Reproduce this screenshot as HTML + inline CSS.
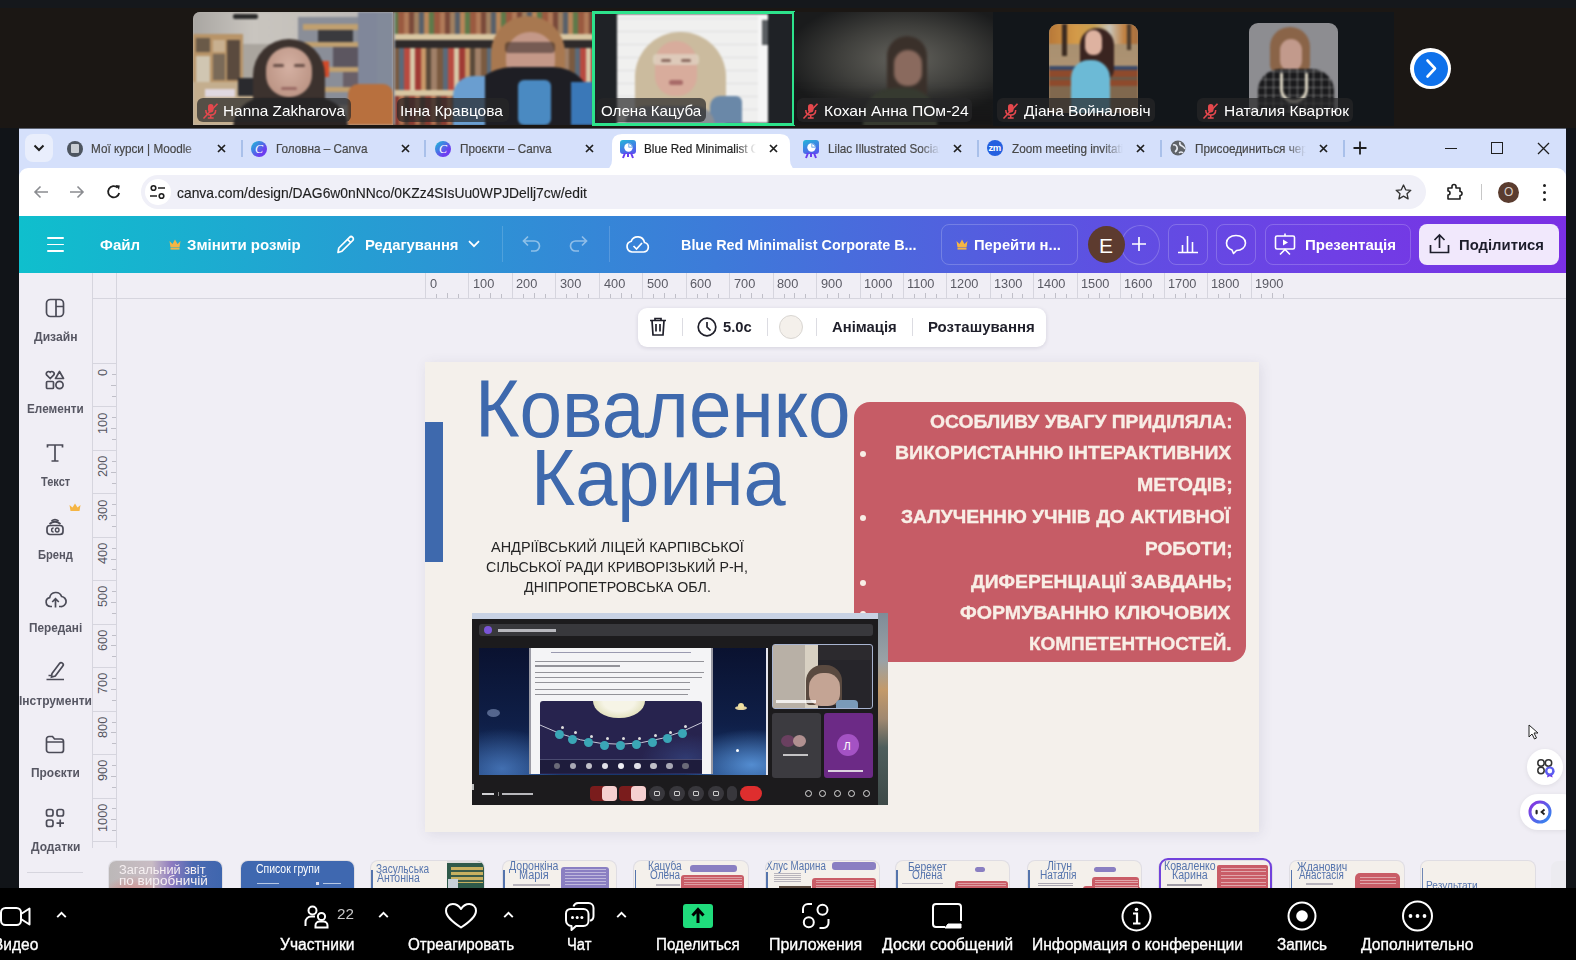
<!DOCTYPE html>
<html><head><meta charset="utf-8">
<style>
*{box-sizing:border-box;margin:0;padding:0}
html,body{width:1576px;height:960px;overflow:hidden}
body{position:relative;background:#1b1714;font-family:"Liberation Sans",sans-serif}
.a{position:absolute}
.t{position:absolute;white-space:nowrap;line-height:1}
svg{position:absolute;overflow:visible}
</style></head><body>
<div class="a" style="left:0px;top:0px;width:1576px;height:8px;background:#15181c;"></div>
<div class="a" style="left:993px;top:12px;width:400.5px;height:113.5px;background:#12161a;"></div>
<div class="a" style="left:193px;top:12px;width:200px;height:113px;overflow:hidden;border-top-left-radius:7px;background:#bbb7b2"><div class="a" style="left:0;top:0;width:200px;height:113px;filter:blur(1.2px)">
<div class="a" style="left:0px;top:0px;width:200px;height:40px;background:linear-gradient(90deg,#a9a6a2,#c9c5bf 30%,#c4c0bb 60%,#b6b4b5);"></div>
<div class="a" style="left:40px;top:2px;width:25px;height:5px;background:#2a2a2a;border-radius:2px;"></div>
<div class="a" style="left:0px;top:22px;width:50px;height:50px;background:#b89468;"></div>
<div class="a" style="left:3px;top:26px;width:14px;height:14px;background:#6a5a48;"></div>
<div class="a" style="left:20px;top:28px;width:12px;height:12px;background:#c8b090;"></div>
<div class="a" style="left:34px;top:28px;width:13px;height:40px;background:#5a4a3e;"></div>
<div class="a" style="left:3px;top:44px;width:14px;height:26px;background:#d0c6b2;"></div>
<div class="a" style="left:20px;top:42px;width:12px;height:26px;background:#7a6a58;"></div>
<div class="a" style="left:50px;top:32px;width:30px;height:40px;background:#aaa59e;"></div>
<div class="a" style="left:105px;top:5px;width:85px;height:88px;background:#8a8e98;"></div>
<div class="a" style="left:110px;top:12px;width:70px;height:6px;background:#c0a070;"></div>
<div class="a" style="left:110px;top:30px;width:70px;height:5px;background:#c0a070;"></div>
<div class="a" style="left:110px;top:55px;width:70px;height:5px;background:#c0a070;"></div>
<div class="a" style="left:110px;top:75px;width:70px;height:5px;background:#c0a070;"></div>
<div class="a" style="left:125px;top:18px;width:35px;height:12px;background:#3a3a3e;"></div>
<div class="a" style="left:140px;top:35px;width:38px;height:20px;background:#5c5660;"></div>
<div class="a" style="left:150px;top:60px;width:28px;height:15px;background:#6a6068;"></div>
<div class="a" style="left:121px;top:49px;width:15px;height:16px;background:#d24a2a;"></div>
<div class="a" style="left:165px;top:0px;width:20px;height:113px;background:#80879a;"></div>
<div class="a" style="left:184px;top:0px;width:16px;height:113px;background:#828a9a;"></div>
<div class="a" style="left:0px;top:70px;width:75px;height:43px;background:#c4ae8e;"></div>
<div class="a" style="left:12px;top:77px;width:30px;height:8px;background:#e0d8e0;"></div>
<div class="a" style="left:45px;top:66px;width:22px;height:18px;background:#2a2a2e;"></div>
<div class="a" style="left:155px;top:72px;width:45px;height:41px;background:#b8703e;border-radius:10px 10px 0 0;"></div>
<div class="a" style="left:60px;top:27px;width:72px;height:90px;background:#3c322e;border-radius:36px 36px 6px 6px;"></div>
<div class="a" style="left:73px;top:35px;width:46px;height:50px;background:radial-gradient(ellipse at 50% 40%,#d4b0a2,#b89080 90%);border-radius:23px 23px 22px 22px;"></div>
<div class="a" style="left:80px;top:52px;width:11px;height:3px;background:#6a5048;border-radius:2px;"></div>
<div class="a" style="left:101px;top:52px;width:11px;height:3px;background:#6a5048;border-radius:2px;"></div>
<div class="a" style="left:88px;top:75px;width:16px;height:3px;background:#9a6a64;border-radius:2px;"></div>
<div class="a" style="left:40px;top:86px;width:115px;height:30px;background:#2a2424;border-radius:30px 30px 0 0;"></div>
</div></div>
<div class="a" style="left:393px;top:12px;width:200px;height:113px;overflow:hidden;background:#6b4a36"><div class="a" style="left:0;top:0;width:200px;height:113px;filter:blur(1px)">
<div class="a" style="left:0px;top:0px;width:200px;height:23px;background:repeating-linear-gradient(90deg,#5e7a4a 0 5px,#9a5a40 5px 11px,#b07a58 11px 16px,#7a4a3a 16px 21px,#a08060 21px 26px,#58606a 26px 31px,#b8865a 31px 36px);"></div>
<div class="a" style="left:0px;top:22px;width:200px;height:6px;background:#d8c6a2;"></div>
<div class="a" style="left:0px;top:28px;width:200px;height:8px;background:#2e2a2a;"></div>
<div class="a" style="left:0px;top:36px;width:200px;height:42px;background:repeating-linear-gradient(90deg,#7a5a40 0 6px,#5a6a7a 6px 11px,#b84a40 11px 17px,#d8c8a8 17px 22px,#a03a34 22px 28px,#c89868 28px 33px,#5a4a3a 33px 38px,#a08068 38px 44px);"></div>
<div class="a" style="left:0px;top:78px;width:200px;height:6px;background:#d8c6a2;"></div>
<div class="a" style="left:0px;top:84px;width:200px;height:29px;background:repeating-linear-gradient(90deg,#8a3a30 0 6px,#b07050 6px 11px,#5a4034 11px 16px);"></div>
<div class="a" style="left:0px;top:0px;width:2px;height:113px;background:#9aa0a8;"></div>
<div class="a" style="left:98px;top:4px;width:74px;height:75px;background:#a87850;border-radius:37px 37px 10px 10px;"></div>
<div class="a" style="left:113px;top:20px;width:49px;height:52px;background:#c49888;border-radius:24px 24px 22px 22px;"></div>
<div class="a" style="left:112px;top:30px;width:50px;height:11px;background:rgba(40,30,30,.5);border-radius:4px;"></div>
<div class="a" style="left:128px;top:55px;width:18px;height:3px;background:#8a5a58;border-radius:2px;"></div>
<div class="a" style="left:70px;top:55px;width:130px;height:60px;background:#1e1e24;border-radius:50px 40px 0 0;"></div>
<div class="a" style="left:60px;top:64px;width:32px;height:50px;background:#6a9ed0;border-radius:20px 0 0 0;"></div>
<div class="a" style="left:125px;top:68px;width:33px;height:45px;background:#4a8ac2;border-radius:6px;"></div>
<div class="a" style="left:178px;top:70px;width:22px;height:43px;background:#3a78b8;"></div>
</div></div>
<div class="a" style="left:591.5px;top:11px;width:203px;height:115px;background:#2de38c"></div>
<div class="a" style="left:594.5px;top:14px;width:197px;height:109px;background:#1f2226;overflow:hidden"><div class="a" style="left:0;top:0;width:197px;height:109px;filter:blur(0.8px)">
<div class="a" style="left:22.5px;top:0px;width:151px;height:109px;background:#f0f0ef;"></div>
<div class="a" style="left:22.5px;top:0px;width:151px;height:109px;background:repeating-linear-gradient(0deg,#dedede 0 1px,transparent 1px 13px);"></div>
<div class="a" style="left:163.5px;top:0px;width:10px;height:109px;background:#f6f6f6;"></div>
<div class="a" style="left:167px;top:6px;width:6px;height:25px;background:#5a5e62;"></div>
<div class="a" style="left:40px;top:18px;width:91px;height:100px;background:#cbbb9e;border-radius:45px 45px 10px 10px;"></div>
<div class="a" style="left:60px;top:27px;width:42px;height:55px;background:#d8ac9c;border-radius:21px 21px 20px 20px;"></div>
<div class="a" style="left:58px;top:40px;width:46px;height:11px;background:rgba(225,215,200,.7);border-radius:4px;"></div>
<div class="a" style="left:66px;top:45px;width:10px;height:3px;background:#8a6a60;border-radius:2px;"></div>
<div class="a" style="left:86px;top:45px;width:10px;height:3px;background:#8a6a60;border-radius:2px;"></div>
<div class="a" style="left:74px;top:66px;width:14px;height:5px;background:#a86a68;border-radius:3px;"></div>
<div class="a" style="left:115px;top:82px;width:32px;height:28px;background:#6a88a8;border-radius:10px 6px 0 0;"></div>
<div class="a" style="left:30px;top:92px;width:90px;height:20px;background:#8a8e96;border-radius:20px 20px 0 0;"></div>
</div></div>
<div class="a" style="left:794px;top:12px;width:199px;height:113px;overflow:hidden;background:radial-gradient(ellipse 60% 55% at 55% 42%,#65645e,#3e3e3b 55%,#1a1b1c 100%)"><div class="a" style="left:0;top:0;width:199px;height:113px;filter:blur(1.5px)">
<div class="a" style="left:0px;top:72px;width:199px;height:41px;background:linear-gradient(180deg,rgba(20,20,20,0),rgba(20,20,20,.8));"></div>
<div class="a" style="left:93px;top:24px;width:40px;height:70px;background:#3a302a;border-radius:20px 20px 6px 6px;"></div>
<div class="a" style="left:100px;top:38px;width:28px;height:36px;background:#8a6a5e;border-radius:14px 14px 13px 13px;"></div>
<div class="a" style="left:69px;top:76px;width:74px;height:40px;background:#363a30;border-radius:30px 30px 0 0;"></div>
</div></div>
<div class="a" style="left:1049px;top:24px;width:89px;height:89px;border-radius:9px 9px 0 0;overflow:hidden;background:#a88a66"><div class="a" style="left:0;top:0;width:89px;height:89px;filter:blur(0.8px)">
<div class="a" style="left:0px;top:0px;width:89px;height:22px;background:linear-gradient(90deg,#b87838,#d49a48 30%,#c8a050 50%,#c8c4b8 68%,#c08040 85%,#a87040);"></div>
<div class="a" style="left:0px;top:20px;width:89px;height:30px;background:linear-gradient(180deg,#a89070,#b09474);"></div>
<div class="a" style="left:13px;top:0px;width:5px;height:32px;background:#3a2a20;"></div>
<div class="a" style="left:78px;top:0px;width:4px;height:26px;background:#4a3a2c;"></div>
<div class="a" style="left:0px;top:42px;width:89px;height:4px;background:#3a4a6a;"></div>
<div class="a" style="left:0px;top:46px;width:89px;height:7px;background:#8e4a2c;"></div>
<div class="a" style="left:0px;top:53px;width:89px;height:3px;background:#6a5a48;"></div>
<div class="a" style="left:0px;top:56px;width:89px;height:6px;background:#8e4a2c;"></div>
<div class="a" style="left:0px;top:62px;width:89px;height:27px;background:#80684e;"></div>
<div class="a" style="left:31px;top:4px;width:34px;height:52px;background:#3a2420;border-radius:17px 17px 10px 6px;"></div>
<div class="a" style="left:36px;top:6px;width:17px;height:25px;background:#deb2a0;border-radius:9px 9px 8px 8px;"></div>
<div class="a" style="left:22px;top:36px;width:39px;height:60px;background:#6cbad6;border-radius:18px 18px 0 0;"></div>
</div></div>
<div class="a" style="left:1248.5px;top:23px;width:89.5px;height:90px;border-radius:9px 9px 0 0;overflow:hidden;background:#8d8d91"><div class="a" style="left:0;top:0;width:89.5px;height:90px;filter:blur(0.8px)">
<div class="a" style="left:21px;top:4px;width:40px;height:46px;background:#8a6448;border-radius:20px 20px 8px 8px;"></div>
<div class="a" style="left:31px;top:16px;width:22px;height:32px;background:#c29a8c;border-radius:11px 11px 10px 10px;"></div>
<div class="a" style="left:9px;top:46px;width:76px;height:50px;background:#1a1a1c;border-radius:22px 22px 0 0;"></div>
<div class="a" style="left:9px;top:46px;width:76px;height:50px;background:repeating-linear-gradient(90deg,transparent 0 7px,rgba(200,200,200,.5) 7px 8px),repeating-linear-gradient(0deg,transparent 0 7px,rgba(200,200,200,.45) 7px 8px);border-radius:22px 22px 0 0;"></div>
<div class="a" style="left:31px;top:50px;width:28px;height:30px;border:3.5px solid #ddd6c4;border-top:none;border-radius:0 0 14px 14px"></div>
</div></div>
<div class="a" style="left:1410px;top:48px;width:41px;height:41px;border-radius:50%;background:#fff"></div>
<div class="a" style="left:1413.5px;top:51.5px;width:34px;height:34px;border-radius:50%;background:#0e71eb"></div>
<svg style="left:1410px;top:48px" width="41" height="41"><path d="M17.5 12.5 L25 20.5 L17.5 28.5" stroke="#fff" stroke-width="2.6" fill="none" stroke-linecap="round" stroke-linejoin="round"/></svg>
<div class="a" style="left:197px;top:98px;width:153.7px;height:24px;border-radius:6px;background:rgba(38,38,40,.7)"></div>
<svg style="left:201.5px;top:102.5px" width="17" height="16" viewBox="0 0 17 16"><rect x="6" y="1" width="5.5" height="8.5" rx="2.75" fill="#e5484d"/><path d="M3.8 7 Q3.8 12 8.75 12 Q13.7 12 13.7 7" stroke="#e5484d" stroke-width="1.5" fill="none"/><path d="M8.75 12 V15 M5.8 15 H11.7" stroke="#e5484d" stroke-width="1.5"/><path d="M1.5 15.5 L15.5 0.8" stroke="#e5484d" stroke-width="1.6"/></svg>
<div class="t" style="left:223.25px;top:103.00px;font-size:15px;color:#fff;transform:scaleX(1.0235);transform-origin:0 0;">Hanna Zakharova</div>
<div class="a" style="left:396.7px;top:98px;width:112.0px;height:24px;border-radius:6px;background:rgba(38,38,40,.7)"></div>
<div class="t" style="left:400.28px;top:103.00px;font-size:15px;color:#fff;transform:scaleX(1.0341);transform-origin:0 0;">Інна Кравцова</div>
<div class="a" style="left:597.3px;top:98px;width:108.70000000000005px;height:24px;border-radius:6px;background:rgba(38,38,40,.7)"></div>
<div class="t" style="left:601.07px;top:103.00px;font-size:15px;color:#fff;transform:scaleX(1.0086);transform-origin:0 0;">Олена Кацуба</div>
<div class="a" style="left:797.3px;top:98px;width:175.20000000000005px;height:24px;border-radius:6px;background:rgba(38,38,40,.7)"></div>
<svg style="left:801.8px;top:102.5px" width="17" height="16" viewBox="0 0 17 16"><rect x="6" y="1" width="5.5" height="8.5" rx="2.75" fill="#e5484d"/><path d="M3.8 7 Q3.8 12 8.75 12 Q13.7 12 13.7 7" stroke="#e5484d" stroke-width="1.5" fill="none"/><path d="M8.75 12 V15 M5.8 15 H11.7" stroke="#e5484d" stroke-width="1.5"/><path d="M1.5 15.5 L15.5 0.8" stroke="#e5484d" stroke-width="1.6"/></svg>
<div class="t" style="left:823.52px;top:103.00px;font-size:15px;color:#fff;transform:scaleX(1.0450);transform-origin:0 0;">Кохан Анна ПОм-24</div>
<div class="a" style="left:997px;top:98px;width:157.5999999999999px;height:24px;border-radius:6px;background:rgba(38,38,40,.7)"></div>
<svg style="left:1001.5px;top:102.5px" width="17" height="16" viewBox="0 0 17 16"><rect x="6" y="1" width="5.5" height="8.5" rx="2.75" fill="#e5484d"/><path d="M3.8 7 Q3.8 12 8.75 12 Q13.7 12 13.7 7" stroke="#e5484d" stroke-width="1.5" fill="none"/><path d="M8.75 12 V15 M5.8 15 H11.7" stroke="#e5484d" stroke-width="1.5"/><path d="M1.5 15.5 L15.5 0.8" stroke="#e5484d" stroke-width="1.6"/></svg>
<div class="t" style="left:1023.90px;top:103.00px;font-size:15px;color:#fff;transform:scaleX(1.0340);transform-origin:0 0;">Діана Войналовіч</div>
<div class="a" style="left:1197px;top:98px;width:156.4000000000001px;height:24px;border-radius:6px;background:rgba(38,38,40,.7)"></div>
<svg style="left:1201.5px;top:102.5px" width="17" height="16" viewBox="0 0 17 16"><rect x="6" y="1" width="5.5" height="8.5" rx="2.75" fill="#e5484d"/><path d="M3.8 7 Q3.8 12 8.75 12 Q13.7 12 13.7 7" stroke="#e5484d" stroke-width="1.5" fill="none"/><path d="M8.75 12 V15 M5.8 15 H11.7" stroke="#e5484d" stroke-width="1.5"/><path d="M1.5 15.5 L15.5 0.8" stroke="#e5484d" stroke-width="1.6"/></svg>
<div class="t" style="left:1223.54px;top:103.00px;font-size:15px;color:#fff;transform:scaleX(1.0342);transform-origin:0 0;">Наталия Квартюк</div>
<div class="a" style="left:0;top:128px;width:19px;height:760px;background:#111418"></div>
<div class="a" style="left:1566px;top:128px;width:10px;height:760px;background:#111418"></div>
<div class="a" style="left:19px;top:128px;width:1547px;height:88px;background:#d5e0fb;border-top:1px solid #5c6270"></div>
<div class="a" style="left:19px;top:168px;width:1547px;height:48px;background:#fff;border-radius:9px 9px 0 0"></div>
<div class="a" style="left:25px;top:134px;width:28px;height:28px;border-radius:8px;background:#e9eefc"></div>
<svg style="left:33px;top:144px" width="12" height="8"><path d="M1.5 1.5 L6 6 L10.5 1.5" stroke="#1f1f1f" stroke-width="2" fill="none"/></svg>
<svg style="left:602px;top:134px" width="198" height="36"><path d="M0 36 Q10 36 10 26 L10 10 Q10 0 20 0 L178 0 Q188 0 188 10 L188 26 Q188 36 198 36 Z" fill="#fff"/></svg>
<div class="a" style="left:67px;top:141px;width:16px;height:16px;border-radius:50%;background:#4d5560"></div><div class="a" style="left:71px;top:144px;width:8px;height:9px;background:#c9cdd3;border-radius:1px"></div>
<div class="a" style="left:91px;top:138px;width:113px;height:20px;overflow:hidden;-webkit-mask-image:linear-gradient(90deg,#000 82%,transparent)"><div class="t" style="left:0.10px;top:3.99px;font-size:13px;color:#474747;transform:scaleX(0.9020);transform-origin:0 0;-webkit-text-stroke:0.2px #474747;">Мої курси | Moodle</div></div>
<svg style="left:216.5px;top:143.5px" width="9.0" height="9.0"><path d="M1 1 L8.0 8.0 M8.0 1 L1 8.0" stroke="#1f1f1f" stroke-width="1.7"/></svg>
<div class="a" style="left:251px;top:141px;width:16px;height:16px;border-radius:50%;background:linear-gradient(135deg,#19c3d5,#6b3ef0 70%)"></div><div class="t" style="left:255px;top:143px;font-size:12px;font-style:italic;color:#fff;font-family:Liberation Serif">C</div>
<div class="a" style="left:276px;top:138px;width:112px;height:20px;overflow:hidden;-webkit-mask-image:linear-gradient(90deg,#000 82%,transparent)"><div class="t" style="left:0.10px;top:3.99px;font-size:13px;color:#474747;transform:scaleX(0.9020);transform-origin:0 0;-webkit-text-stroke:0.2px #474747;">Головна – Canva</div></div>
<svg style="left:400.5px;top:143.5px" width="9.0" height="9.0"><path d="M1 1 L8.0 8.0 M8.0 1 L1 8.0" stroke="#1f1f1f" stroke-width="1.7"/></svg>
<div class="a" style="left:435px;top:141px;width:16px;height:16px;border-radius:50%;background:linear-gradient(135deg,#19c3d5,#6b3ef0 70%)"></div><div class="t" style="left:439px;top:143px;font-size:12px;font-style:italic;color:#fff;font-family:Liberation Serif">C</div>
<div class="a" style="left:460px;top:138px;width:112px;height:20px;overflow:hidden;-webkit-mask-image:linear-gradient(90deg,#000 82%,transparent)"><div class="t" style="left:0.10px;top:3.99px;font-size:13px;color:#474747;transform:scaleX(0.9020);transform-origin:0 0;-webkit-text-stroke:0.2px #474747;">Проєкти – Canva</div></div>
<svg style="left:584.5px;top:143.5px" width="9.0" height="9.0"><path d="M1 1 L8.0 8.0 M8.0 1 L1 8.0" stroke="#1f1f1f" stroke-width="1.7"/></svg>
<div class="a" style="left:620px;top:140px;width:16px;height:14px;border-radius:3px;background:linear-gradient(160deg,#23b7d8,#5a4cf0)"></div><svg style="left:623.5px;top:142.5px" width="9" height="9"><circle cx="4.5" cy="4.5" r="4.2" fill="#fff"/><path d="M4.5 4.5 V0.3 A4.2 4.2 0 0 1 8.7 4.5 Z" fill="#3f8be0"/><path d="M5.2 3.8 V1 A3.5 3.5 0 0 1 8 3.8 Z" fill="#fff"/></svg><svg style="left:623px;top:153px" width="10" height="5"><path d="M2 0 L0 5 M8 0 L10 5 M5 0 V4" stroke="#6a3ef0" stroke-width="2"/></svg>
<div class="a" style="left:644px;top:138px;width:112px;height:20px;overflow:hidden;-webkit-mask-image:linear-gradient(90deg,#000 82%,transparent)"><div class="t" style="left:0.10px;top:3.99px;font-size:13px;color:#1f1f1f;transform:scaleX(0.9020);transform-origin:0 0;-webkit-text-stroke:0.2px #1f1f1f;">Blue Red Minimalist Corporate</div></div>
<svg style="left:768.5px;top:143.5px" width="9.0" height="9.0"><path d="M1 1 L8.0 8.0 M8.0 1 L1 8.0" stroke="#1f1f1f" stroke-width="1.7"/></svg>
<div class="a" style="left:803px;top:140px;width:16px;height:14px;border-radius:3px;background:linear-gradient(160deg,#23b7d8,#5a4cf0)"></div><svg style="left:806.5px;top:142.5px" width="9" height="9"><circle cx="4.5" cy="4.5" r="4.2" fill="#fff"/><path d="M4.5 4.5 V0.3 A4.2 4.2 0 0 1 8.7 4.5 Z" fill="#3f8be0"/><path d="M5.2 3.8 V1 A3.5 3.5 0 0 1 8 3.8 Z" fill="#fff"/></svg><svg style="left:806px;top:153px" width="10" height="5"><path d="M2 0 L0 5 M8 0 L10 5 M5 0 V4" stroke="#6a3ef0" stroke-width="2"/></svg>
<div class="a" style="left:828px;top:138px;width:112px;height:20px;overflow:hidden;-webkit-mask-image:linear-gradient(90deg,#000 82%,transparent)"><div class="t" style="left:0.10px;top:3.99px;font-size:13px;color:#474747;transform:scaleX(0.9020);transform-origin:0 0;-webkit-text-stroke:0.2px #474747;">Lilac Illustrated Social</div></div>
<svg style="left:952.5px;top:143.5px" width="9.0" height="9.0"><path d="M1 1 L8.0 8.0 M8.0 1 L1 8.0" stroke="#1f1f1f" stroke-width="1.7"/></svg>
<div class="a" style="left:987px;top:140px;width:16px;height:16px;border-radius:50%;background:#2460e0"></div><div class="t" style="left:988.5px;top:143px;font-size:9.5px;font-weight:bold;color:#fff;letter-spacing:-0.5px">zm</div>
<div class="a" style="left:1011px;top:138px;width:112px;height:20px;overflow:hidden;-webkit-mask-image:linear-gradient(90deg,#000 82%,transparent)"><div class="t" style="left:0.66px;top:3.99px;font-size:13px;color:#474747;transform:scaleX(0.9020);transform-origin:0 0;-webkit-text-stroke:0.2px #474747;">Zoom meeting invitation</div></div>
<svg style="left:1135.5px;top:143.5px" width="9.0" height="9.0"><path d="M1 1 L8.0 8.0 M8.0 1 L1 8.0" stroke="#1f1f1f" stroke-width="1.7"/></svg>
<svg style="left:1170px;top:140px" width="16" height="16"><circle cx="8" cy="8" r="7.5" fill="#5f6368"/><path d="M3 5 Q6 4 7 7 Q8 10 5 12 M10 2 Q9 5 12 6 Q14 7 15 9 M9 13 Q11 11 13 13" stroke="#e6e9f0" stroke-width="1.6" fill="none"/></svg>
<div class="a" style="left:1195px;top:138px;width:111px;height:20px;overflow:hidden;-webkit-mask-image:linear-gradient(90deg,#000 82%,transparent)"><div class="t" style="left:0.10px;top:3.99px;font-size:13px;color:#474747;transform:scaleX(0.9020);transform-origin:0 0;-webkit-text-stroke:0.2px #474747;">Присоединиться через</div></div>
<svg style="left:1318.5px;top:143.5px" width="9.0" height="9.0"><path d="M1 1 L8.0 8.0 M8.0 1 L1 8.0" stroke="#1f1f1f" stroke-width="1.7"/></svg>
<div class="a" style="left:241px;top:140px;width:1.6px;height:17px;background:#a9c0ea"></div>
<div class="a" style="left:424px;top:140px;width:1.6px;height:17px;background:#a9c0ea"></div>
<div class="a" style="left:977px;top:140px;width:1.6px;height:17px;background:#a9c0ea"></div>
<div class="a" style="left:1160px;top:140px;width:1.6px;height:17px;background:#a9c0ea"></div>
<div class="a" style="left:1343px;top:140px;width:1.6px;height:17px;background:#a9c0ea"></div>
<svg style="left:1353px;top:141px" width="14" height="14"><path d="M7 0.5 V13.5 M0.5 7 H13.5" stroke="#1f1f1f" stroke-width="1.8"/></svg>
<div class="a" style="left:1445px;top:148px;width:12px;height:1.4px;background:#1f1f1f"></div>
<div class="a" style="left:1491px;top:142px;width:12px;height:12px;border:1.4px solid #1f1f1f"></div>
<svg style="left:1536.5px;top:141.5px" width="13.0" height="13.0"><path d="M1 1 L12.0 12.0 M12.0 1 L1 12.0" stroke="#1f1f1f" stroke-width="1.3"/></svg>
<svg style="left:33px;top:185px" width="16" height="14"><path d="M15 7 H2 M7.5 1.5 L2 7 L7.5 12.5" stroke="#8a8c90" stroke-width="1.6" fill="none"/></svg>
<svg style="left:69px;top:185px" width="16" height="14"><path d="M1 7 H14 M8.5 1.5 L14 7 L8.5 12.5" stroke="#8a8c90" stroke-width="1.6" fill="none"/></svg>
<svg style="left:106px;top:184px" width="16" height="16"><path d="M13.2 9 A5.6 5.6 0 1 1 11.5 3.6" stroke="#1f1f1f" stroke-width="1.8" fill="none"/><path d="M9.5 1 L13.8 1.6 L13 5.8 Z" fill="#1f1f1f"/></svg>
<div class="a" style="left:141px;top:175px;width:1285px;height:34px;border-radius:17px;background:#f0f0f8"></div>
<div class="a" style="left:145px;top:179px;width:26px;height:26px;border-radius:13px;background:#fff"></div>
<svg style="left:149px;top:184px" width="17" height="16"><path d="M9 4 H16 M1 12 H8" stroke="#1f1f1f" stroke-width="1.7"/><circle cx="4.5" cy="4" r="2.3" stroke="#1f1f1f" stroke-width="1.6" fill="none"/><circle cx="12.5" cy="12" r="2.3" stroke="#1f1f1f" stroke-width="1.6" fill="none"/></svg>
<div class="t" style="left:177.42px;top:184.59px;font-size:15px;color:#1f1f1f;transform:scaleX(0.9242);transform-origin:0 0;-webkit-text-stroke:0.15px #1f1f1f;">canva.com/design/DAG6w0nNNco/0KZz4SIsUu0WPJDellj7cw/edit</div>
<svg style="left:1395px;top:184px" width="17" height="16"><path d="M8.5 1 L10.7 5.8 L15.8 6.3 L12 9.7 L13.1 14.8 L8.5 12.2 L3.9 14.8 L5 9.7 L1.2 6.3 L6.3 5.8 Z" stroke="#333" stroke-width="1.35" fill="none" stroke-linejoin="round"/></svg>
<svg style="left:1446px;top:183px" width="18" height="18"><path d="M2 5 H6 V3.5 A2 2 0 0 1 10 3.5 V5 H14 V8.5 A2 2 0 0 1 14 12.5 V16 H2 V12 A2 2 0 0 0 2 8 Z" stroke="#1f1f1f" stroke-width="1.6" fill="none" stroke-linejoin="round"/></svg>
<div class="a" style="left:1481px;top:184px;width:1px;height:16px;background:#c7c7c7"></div>
<div class="a" style="left:1498px;top:182px;width:21px;height:21px;border-radius:50%;background:#5a3c2f"></div>
<div class="t" style="left:1504px;top:186px;font-size:12px;color:#d9cfc8">O</div>
<div class="a" style="left:1543px;top:184px;width:3.4px;height:3.4px;border-radius:50%;background:#1f1f1f"></div>
<div class="a" style="left:1543px;top:191px;width:3.4px;height:3.4px;border-radius:50%;background:#1f1f1f"></div>
<div class="a" style="left:1543px;top:198px;width:3.4px;height:3.4px;border-radius:50%;background:#1f1f1f"></div>
<div class="a" style="left:19px;top:216px;width:1547px;height:57px;background:linear-gradient(90deg,#0fbfcd 0%,#3d7bd9 45%,#5e50e2 70%,#6f3fe5 85%,#7b2fe4 100%)"></div>
<div class="a" style="left:47px;top:237.1px;width:16.5px;height:1.8px;background:#fff;border-radius:1px"></div>
<div class="a" style="left:47px;top:243.6px;width:16.5px;height:1.8px;background:#fff;border-radius:1px"></div>
<div class="a" style="left:47px;top:250.1px;width:16.5px;height:1.8px;background:#fff;border-radius:1px"></div>
<div class="t" style="left:99.50px;top:236.79px;font-size:15px;color:#fff;font-weight:bold;transform:scaleX(1.0059);transform-origin:0 0;">Файл</div>
<svg style="left:169px;top:239px" width="12" height="11"><path d="M0.5 2 L3.5 5 L6 0.5 L8.5 5 L11.5 2 L10.5 8.5 H1.5 Z" fill="#f5b544"/><rect x="1.5" y="9" width="9" height="1.6" fill="#f5b544"/></svg>
<div class="t" style="left:187.25px;top:236.79px;font-size:15px;color:#fff;font-weight:bold;transform:scaleX(1.0027);transform-origin:0 0;">Змінити розмір</div>
<svg style="left:336px;top:235px" width="20" height="19"><path d="M2 17.5 L2.8 13 L13.5 2.3 A2.1 2.1 0 0 1 16.7 5.5 L6 16.2 Z M11.5 4.3 L14.7 7.5" stroke="#fff" stroke-width="1.7" fill="none" stroke-linejoin="round"/></svg>
<div class="t" style="left:364.71px;top:236.79px;font-size:15px;color:#fff;font-weight:bold;transform:scaleX(0.9879);transform-origin:0 0;">Редагування</div>
<svg style="left:468px;top:240px" width="12" height="8"><path d="M1 1.2 L6 6.2 L11 1.2" stroke="#fff" stroke-width="1.7" fill="none"/></svg>
<div class="a" style="left:502px;top:226px;width:1px;height:36px;background:rgba(255,255,255,.16)"></div>
<svg style="left:522px;top:235px" width="20" height="17"><path d="M6 1.5 L1.5 6 L6 10.5 M1.5 6 H12.5 A5 5 0 0 1 12.5 16 H9" stroke="rgba(255,255,255,.45)" stroke-width="1.7" fill="none"/></svg>
<svg style="left:568px;top:235px" width="20" height="17"><path d="M14 1.5 L18.5 6 L14 10.5 M18.5 6 H7.5 A5 5 0 0 0 7.5 16 H11" stroke="rgba(255,255,255,.45)" stroke-width="1.7" fill="none"/></svg>
<div class="a" style="left:609px;top:226px;width:1px;height:36px;background:rgba(255,255,255,.16)"></div>
<svg style="left:626px;top:236px" width="23" height="17"><path d="M6 16 H17.5 A4.8 4.8 0 0 0 18.5 6.5 A7 7 0 0 0 5.2 5.2 A5.5 5.5 0 0 0 6 16 Z" stroke="#fff" stroke-width="1.7" fill="none"/><path d="M7.5 10 L10.5 13 L16 7" stroke="#fff" stroke-width="1.7" fill="none"/></svg>
<div class="t" style="left:681.24px;top:237.29px;font-size:15px;color:#fff;font-weight:bold;transform:scaleX(0.9582);transform-origin:0 0;">Blue Red Minimalist Corporate B...</div>
<div class="a" style="left:941px;top:224px;width:137px;height:41px;border-radius:8px;border:1px solid rgba(255,255,255,.2)"></div>
<svg style="left:956px;top:239px" width="12" height="11"><path d="M0.5 2 L3.5 5 L6 0.5 L8.5 5 L11.5 2 L10.5 8.5 H1.5 Z" fill="#f5b544"/><rect x="1.5" y="9" width="9" height="1.6" fill="#f5b544"/></svg>
<div class="t" style="left:974.01px;top:237.29px;font-size:15px;color:#fff;font-weight:bold;transform:scaleX(0.9855);transform-origin:0 0;">Перейти н...</div>
<div class="a" style="left:1121px;top:224.5px;width:39px;height:40px;border-radius:50%;border:1px solid rgba(255,255,255,.2)"></div>
<div class="a" style="left:1088px;top:226px;width:37px;height:37px;border-radius:50%;background:#5d3b2f"></div>
<div class="t" style="left:1099.12px;top:235.21px;font-size:21px;color:#fff;">E</div>
<svg style="left:1131px;top:236px" width="16" height="16"><path d="M8 1 V15 M1 8 H15" stroke="#fff" stroke-width="1.7"/></svg>
<div class="a" style="left:1168px;top:224px;width:40px;height:41px;border-radius:8px;border:1px solid rgba(255,255,255,.2)"></div>
<svg style="left:1177px;top:234px" width="22" height="20"><path d="M1 18.5 H21 M5.5 18.5 V11 M10.5 18.5 V2 M15.5 18.5 V8" stroke="#fff" stroke-width="1.6"/></svg>
<div class="a" style="left:1216px;top:224px;width:40px;height:41px;border-radius:8px;border:1px solid rgba(255,255,255,.2)"></div>
<svg style="left:1225px;top:234px" width="22" height="21"><path d="M11 1.5 C5.5 1.5 1.5 4.8 1.5 9 C1.5 12.2 3.8 14.8 7 16 L8.5 19.5 L11.5 16.5 C16.5 16.5 20.5 13.2 20.5 9 C20.5 4.8 16.5 1.5 11 1.5 Z" stroke="#fff" stroke-width="1.6" fill="none" stroke-linejoin="round"/></svg>
<div class="a" style="left:1265px;top:224px;width:146px;height:41px;border-radius:8px;border:1px solid rgba(255,255,255,.2)"></div>
<svg style="left:1274px;top:233px" width="22" height="22"><rect x="1.5" y="3" width="19" height="13" rx="1.5" stroke="#fff" stroke-width="1.6" fill="none"/><path d="M11 0.5 V3 M6 21.5 L11 16.5 L16 21.5" stroke="#fff" stroke-width="1.6" fill="none"/><path d="M9 6.5 L14 9.5 L9 12.5 Z" fill="#fff"/></svg>
<div class="t" style="left:1305.00px;top:237.29px;font-size:15px;color:#fff;font-weight:bold;transform:scaleX(1.0028);transform-origin:0 0;">Презентація</div>
<div class="a" style="left:1419px;top:224px;width:140px;height:41px;border-radius:8px;background:#f1e8fc"></div>
<svg style="left:1429px;top:233px" width="21" height="21"><path d="M1.5 12 V19.5 H19.5 V12 M10.5 15 V2 M5.5 7 L10.5 2 L15.5 7" stroke="#1d1d2b" stroke-width="1.7" fill="none"/></svg>
<div class="t" style="left:1459.01px;top:237.29px;font-size:15px;color:#1d1d2b;font-weight:bold;transform:scaleX(0.9896);transform-origin:0 0;">Поділитися</div>
<div class="a" style="left:19px;top:273px;width:1547px;height:615px;background:#f0eef5"></div>
<div class="a" style="left:92px;top:273px;width:1px;height:580px;background:#d6d5de"></div>
<div class="a" style="left:116px;top:273px;width:1px;height:580px;background:#d6d5de"></div>
<div class="a" style="left:92px;top:298px;width:1474px;height:1px;background:#d6d5de"></div>
<div class="a" style="left:425.0px;top:273px;width:1px;height:25px;background:#d6d5de"></div>
<div class="t" style="left:429.60px;top:278.14px;font-size:12px;color:#5a5a64;transform:scaleX(1.0650);transform-origin:0 0;">0</div>
<div class="a" style="left:435.9px;top:294px;width:1px;height:4px;background:#c0bfc8"></div>
<div class="a" style="left:446.7px;top:293px;width:1px;height:5px;background:#c0bfc8"></div>
<div class="a" style="left:457.6px;top:294px;width:1px;height:4px;background:#c0bfc8"></div>
<div class="a" style="left:468.4px;top:273px;width:1px;height:25px;background:#d6d5de"></div>
<div class="t" style="left:472.52px;top:278.14px;font-size:12px;color:#5a5a64;transform:scaleX(1.0650);transform-origin:0 0;">100</div>
<div class="a" style="left:479.3px;top:294px;width:1px;height:4px;background:#c0bfc8"></div>
<div class="a" style="left:490.2px;top:293px;width:1px;height:5px;background:#c0bfc8"></div>
<div class="a" style="left:501.0px;top:294px;width:1px;height:4px;background:#c0bfc8"></div>
<div class="a" style="left:511.9px;top:273px;width:1px;height:25px;background:#d6d5de"></div>
<div class="t" style="left:516.37px;top:278.14px;font-size:12px;color:#5a5a64;transform:scaleX(1.0650);transform-origin:0 0;">200</div>
<div class="a" style="left:522.8px;top:294px;width:1px;height:4px;background:#c0bfc8"></div>
<div class="a" style="left:533.6px;top:293px;width:1px;height:5px;background:#c0bfc8"></div>
<div class="a" style="left:544.5px;top:294px;width:1px;height:4px;background:#c0bfc8"></div>
<div class="a" style="left:555.4px;top:273px;width:1px;height:25px;background:#d6d5de"></div>
<div class="t" style="left:559.95px;top:278.14px;font-size:12px;color:#5a5a64;transform:scaleX(1.0650);transform-origin:0 0;">300</div>
<div class="a" style="left:566.2px;top:294px;width:1px;height:4px;background:#c0bfc8"></div>
<div class="a" style="left:577.1px;top:293px;width:1px;height:5px;background:#c0bfc8"></div>
<div class="a" style="left:587.9px;top:294px;width:1px;height:4px;background:#c0bfc8"></div>
<div class="a" style="left:598.8px;top:273px;width:1px;height:25px;background:#d6d5de"></div>
<div class="t" style="left:603.53px;top:278.14px;font-size:12px;color:#5a5a64;transform:scaleX(1.0650);transform-origin:0 0;">400</div>
<div class="a" style="left:609.7px;top:294px;width:1px;height:4px;background:#c0bfc8"></div>
<div class="a" style="left:620.5px;top:293px;width:1px;height:5px;background:#c0bfc8"></div>
<div class="a" style="left:631.4px;top:294px;width:1px;height:4px;background:#c0bfc8"></div>
<div class="a" style="left:642.2px;top:273px;width:1px;height:25px;background:#d6d5de"></div>
<div class="t" style="left:646.85px;top:278.14px;font-size:12px;color:#5a5a64;transform:scaleX(1.0650);transform-origin:0 0;">500</div>
<div class="a" style="left:653.1px;top:294px;width:1px;height:4px;background:#c0bfc8"></div>
<div class="a" style="left:664.0px;top:293px;width:1px;height:5px;background:#c0bfc8"></div>
<div class="a" style="left:674.8px;top:294px;width:1px;height:4px;background:#c0bfc8"></div>
<div class="a" style="left:685.7px;top:273px;width:1px;height:25px;background:#d6d5de"></div>
<div class="t" style="left:690.17px;top:278.14px;font-size:12px;color:#5a5a64;transform:scaleX(1.0650);transform-origin:0 0;">600</div>
<div class="a" style="left:696.6px;top:294px;width:1px;height:4px;background:#c0bfc8"></div>
<div class="a" style="left:707.4px;top:293px;width:1px;height:5px;background:#c0bfc8"></div>
<div class="a" style="left:718.3px;top:294px;width:1px;height:4px;background:#c0bfc8"></div>
<div class="a" style="left:729.2px;top:273px;width:1px;height:25px;background:#d6d5de"></div>
<div class="t" style="left:733.62px;top:278.14px;font-size:12px;color:#5a5a64;transform:scaleX(1.0650);transform-origin:0 0;">700</div>
<div class="a" style="left:740.0px;top:294px;width:1px;height:4px;background:#c0bfc8"></div>
<div class="a" style="left:750.9px;top:293px;width:1px;height:5px;background:#c0bfc8"></div>
<div class="a" style="left:761.7px;top:294px;width:1px;height:4px;background:#c0bfc8"></div>
<div class="a" style="left:772.6px;top:273px;width:1px;height:25px;background:#d6d5de"></div>
<div class="t" style="left:777.07px;top:278.14px;font-size:12px;color:#5a5a64;transform:scaleX(1.0650);transform-origin:0 0;">800</div>
<div class="a" style="left:783.5px;top:294px;width:1px;height:4px;background:#c0bfc8"></div>
<div class="a" style="left:794.3px;top:293px;width:1px;height:5px;background:#c0bfc8"></div>
<div class="a" style="left:805.2px;top:294px;width:1px;height:4px;background:#c0bfc8"></div>
<div class="a" style="left:816.0px;top:273px;width:1px;height:25px;background:#d6d5de"></div>
<div class="t" style="left:820.52px;top:278.14px;font-size:12px;color:#5a5a64;transform:scaleX(1.0650);transform-origin:0 0;">900</div>
<div class="a" style="left:826.9px;top:294px;width:1px;height:4px;background:#c0bfc8"></div>
<div class="a" style="left:837.8px;top:293px;width:1px;height:5px;background:#c0bfc8"></div>
<div class="a" style="left:848.6px;top:294px;width:1px;height:4px;background:#c0bfc8"></div>
<div class="a" style="left:859.5px;top:273px;width:1px;height:25px;background:#d6d5de"></div>
<div class="t" style="left:863.57px;top:278.14px;font-size:12px;color:#5a5a64;transform:scaleX(1.0650);transform-origin:0 0;">1000</div>
<div class="a" style="left:870.4px;top:294px;width:1px;height:4px;background:#c0bfc8"></div>
<div class="a" style="left:881.2px;top:293px;width:1px;height:5px;background:#c0bfc8"></div>
<div class="a" style="left:892.1px;top:294px;width:1px;height:4px;background:#c0bfc8"></div>
<div class="a" style="left:903.0px;top:273px;width:1px;height:25px;background:#d6d5de"></div>
<div class="t" style="left:907.02px;top:278.14px;font-size:12px;color:#5a5a64;transform:scaleX(1.0650);transform-origin:0 0;">1100</div>
<div class="a" style="left:913.8px;top:294px;width:1px;height:4px;background:#c0bfc8"></div>
<div class="a" style="left:924.7px;top:293px;width:1px;height:5px;background:#c0bfc8"></div>
<div class="a" style="left:935.5px;top:294px;width:1px;height:4px;background:#c0bfc8"></div>
<div class="a" style="left:946.4px;top:273px;width:1px;height:25px;background:#d6d5de"></div>
<div class="t" style="left:950.47px;top:278.14px;font-size:12px;color:#5a5a64;transform:scaleX(1.0650);transform-origin:0 0;">1200</div>
<div class="a" style="left:957.3px;top:294px;width:1px;height:4px;background:#c0bfc8"></div>
<div class="a" style="left:968.1px;top:293px;width:1px;height:5px;background:#c0bfc8"></div>
<div class="a" style="left:979.0px;top:294px;width:1px;height:4px;background:#c0bfc8"></div>
<div class="a" style="left:989.9px;top:273px;width:1px;height:25px;background:#d6d5de"></div>
<div class="t" style="left:993.92px;top:278.14px;font-size:12px;color:#5a5a64;transform:scaleX(1.0650);transform-origin:0 0;">1300</div>
<div class="a" style="left:1000.7px;top:294px;width:1px;height:4px;background:#c0bfc8"></div>
<div class="a" style="left:1011.6px;top:293px;width:1px;height:5px;background:#c0bfc8"></div>
<div class="a" style="left:1022.4px;top:294px;width:1px;height:4px;background:#c0bfc8"></div>
<div class="a" style="left:1033.3px;top:273px;width:1px;height:25px;background:#d6d5de"></div>
<div class="t" style="left:1037.37px;top:278.14px;font-size:12px;color:#5a5a64;transform:scaleX(1.0650);transform-origin:0 0;">1400</div>
<div class="a" style="left:1044.2px;top:294px;width:1px;height:4px;background:#c0bfc8"></div>
<div class="a" style="left:1055.0px;top:293px;width:1px;height:5px;background:#c0bfc8"></div>
<div class="a" style="left:1065.9px;top:294px;width:1px;height:4px;background:#c0bfc8"></div>
<div class="a" style="left:1076.8px;top:273px;width:1px;height:25px;background:#d6d5de"></div>
<div class="t" style="left:1080.82px;top:278.14px;font-size:12px;color:#5a5a64;transform:scaleX(1.0650);transform-origin:0 0;">1500</div>
<div class="a" style="left:1087.6px;top:294px;width:1px;height:4px;background:#c0bfc8"></div>
<div class="a" style="left:1098.5px;top:293px;width:1px;height:5px;background:#c0bfc8"></div>
<div class="a" style="left:1109.3px;top:294px;width:1px;height:4px;background:#c0bfc8"></div>
<div class="a" style="left:1120.2px;top:273px;width:1px;height:25px;background:#d6d5de"></div>
<div class="t" style="left:1124.27px;top:278.14px;font-size:12px;color:#5a5a64;transform:scaleX(1.0650);transform-origin:0 0;">1600</div>
<div class="a" style="left:1131.1px;top:294px;width:1px;height:4px;background:#c0bfc8"></div>
<div class="a" style="left:1141.9px;top:293px;width:1px;height:5px;background:#c0bfc8"></div>
<div class="a" style="left:1152.8px;top:294px;width:1px;height:4px;background:#c0bfc8"></div>
<div class="a" style="left:1163.7px;top:273px;width:1px;height:25px;background:#d6d5de"></div>
<div class="t" style="left:1167.72px;top:278.14px;font-size:12px;color:#5a5a64;transform:scaleX(1.0650);transform-origin:0 0;">1700</div>
<div class="a" style="left:1174.5px;top:294px;width:1px;height:4px;background:#c0bfc8"></div>
<div class="a" style="left:1185.4px;top:293px;width:1px;height:5px;background:#c0bfc8"></div>
<div class="a" style="left:1196.2px;top:294px;width:1px;height:4px;background:#c0bfc8"></div>
<div class="a" style="left:1207.1px;top:273px;width:1px;height:25px;background:#d6d5de"></div>
<div class="t" style="left:1211.17px;top:278.14px;font-size:12px;color:#5a5a64;transform:scaleX(1.0650);transform-origin:0 0;">1800</div>
<div class="a" style="left:1218.0px;top:294px;width:1px;height:4px;background:#c0bfc8"></div>
<div class="a" style="left:1228.8px;top:293px;width:1px;height:5px;background:#c0bfc8"></div>
<div class="a" style="left:1239.7px;top:294px;width:1px;height:4px;background:#c0bfc8"></div>
<div class="a" style="left:1250.6px;top:273px;width:1px;height:25px;background:#d6d5de"></div>
<div class="t" style="left:1254.62px;top:278.14px;font-size:12px;color:#5a5a64;transform:scaleX(1.0650);transform-origin:0 0;">1900</div>
<div class="a" style="left:1261.4px;top:294px;width:1px;height:4px;background:#c0bfc8"></div>
<div class="a" style="left:1272.3px;top:293px;width:1px;height:5px;background:#c0bfc8"></div>
<div class="a" style="left:1283.1px;top:294px;width:1px;height:4px;background:#c0bfc8"></div>
<div class="a" style="left:92px;top:363.0px;width:25px;height:1px;background:#d6d5de"></div>
<div class="t" style="left:97px;top:369.0px;width:14px;height:7.1px;"><div class="t" style="left:0;top:7.1px;font-size:12px;color:#55555f;transform:rotate(-90deg) scaleX(1.065);transform-origin:0 0">0</div></div>
<div class="a" style="left:112px;top:373.9px;width:4px;height:1px;background:#c0bfc8"></div>
<div class="a" style="left:111px;top:384.7px;width:5px;height:1px;background:#c0bfc8"></div>
<div class="a" style="left:112px;top:395.6px;width:4px;height:1px;background:#c0bfc8"></div>
<div class="a" style="left:92px;top:406.4px;width:25px;height:1px;background:#d6d5de"></div>
<div class="t" style="left:97px;top:412.4px;width:14px;height:21.3px;"><div class="t" style="left:0;top:21.3px;font-size:12px;color:#55555f;transform:rotate(-90deg) scaleX(1.065);transform-origin:0 0">100</div></div>
<div class="a" style="left:112px;top:417.3px;width:4px;height:1px;background:#c0bfc8"></div>
<div class="a" style="left:111px;top:428.2px;width:5px;height:1px;background:#c0bfc8"></div>
<div class="a" style="left:112px;top:439.0px;width:4px;height:1px;background:#c0bfc8"></div>
<div class="a" style="left:92px;top:449.9px;width:25px;height:1px;background:#d6d5de"></div>
<div class="t" style="left:97px;top:455.9px;width:14px;height:21.3px;"><div class="t" style="left:0;top:21.3px;font-size:12px;color:#55555f;transform:rotate(-90deg) scaleX(1.065);transform-origin:0 0">200</div></div>
<div class="a" style="left:112px;top:460.8px;width:4px;height:1px;background:#c0bfc8"></div>
<div class="a" style="left:111px;top:471.6px;width:5px;height:1px;background:#c0bfc8"></div>
<div class="a" style="left:112px;top:482.5px;width:4px;height:1px;background:#c0bfc8"></div>
<div class="a" style="left:92px;top:493.4px;width:25px;height:1px;background:#d6d5de"></div>
<div class="t" style="left:97px;top:499.4px;width:14px;height:21.3px;"><div class="t" style="left:0;top:21.3px;font-size:12px;color:#55555f;transform:rotate(-90deg) scaleX(1.065);transform-origin:0 0">300</div></div>
<div class="a" style="left:112px;top:504.2px;width:4px;height:1px;background:#c0bfc8"></div>
<div class="a" style="left:111px;top:515.1px;width:5px;height:1px;background:#c0bfc8"></div>
<div class="a" style="left:112px;top:525.9px;width:4px;height:1px;background:#c0bfc8"></div>
<div class="a" style="left:92px;top:536.8px;width:25px;height:1px;background:#d6d5de"></div>
<div class="t" style="left:97px;top:542.8px;width:14px;height:21.3px;"><div class="t" style="left:0;top:21.3px;font-size:12px;color:#55555f;transform:rotate(-90deg) scaleX(1.065);transform-origin:0 0">400</div></div>
<div class="a" style="left:112px;top:547.7px;width:4px;height:1px;background:#c0bfc8"></div>
<div class="a" style="left:111px;top:558.5px;width:5px;height:1px;background:#c0bfc8"></div>
<div class="a" style="left:112px;top:569.4px;width:4px;height:1px;background:#c0bfc8"></div>
<div class="a" style="left:92px;top:580.2px;width:25px;height:1px;background:#d6d5de"></div>
<div class="t" style="left:97px;top:586.2px;width:14px;height:21.3px;"><div class="t" style="left:0;top:21.3px;font-size:12px;color:#55555f;transform:rotate(-90deg) scaleX(1.065);transform-origin:0 0">500</div></div>
<div class="a" style="left:112px;top:591.1px;width:4px;height:1px;background:#c0bfc8"></div>
<div class="a" style="left:111px;top:602.0px;width:5px;height:1px;background:#c0bfc8"></div>
<div class="a" style="left:112px;top:612.8px;width:4px;height:1px;background:#c0bfc8"></div>
<div class="a" style="left:92px;top:623.7px;width:25px;height:1px;background:#d6d5de"></div>
<div class="t" style="left:97px;top:629.7px;width:14px;height:21.3px;"><div class="t" style="left:0;top:21.3px;font-size:12px;color:#55555f;transform:rotate(-90deg) scaleX(1.065);transform-origin:0 0">600</div></div>
<div class="a" style="left:112px;top:634.6px;width:4px;height:1px;background:#c0bfc8"></div>
<div class="a" style="left:111px;top:645.4px;width:5px;height:1px;background:#c0bfc8"></div>
<div class="a" style="left:112px;top:656.3px;width:4px;height:1px;background:#c0bfc8"></div>
<div class="a" style="left:92px;top:667.2px;width:25px;height:1px;background:#d6d5de"></div>
<div class="t" style="left:97px;top:673.2px;width:14px;height:21.3px;"><div class="t" style="left:0;top:21.3px;font-size:12px;color:#55555f;transform:rotate(-90deg) scaleX(1.065);transform-origin:0 0">700</div></div>
<div class="a" style="left:112px;top:678.0px;width:4px;height:1px;background:#c0bfc8"></div>
<div class="a" style="left:111px;top:688.9px;width:5px;height:1px;background:#c0bfc8"></div>
<div class="a" style="left:112px;top:699.7px;width:4px;height:1px;background:#c0bfc8"></div>
<div class="a" style="left:92px;top:710.6px;width:25px;height:1px;background:#d6d5de"></div>
<div class="t" style="left:97px;top:716.6px;width:14px;height:21.3px;"><div class="t" style="left:0;top:21.3px;font-size:12px;color:#55555f;transform:rotate(-90deg) scaleX(1.065);transform-origin:0 0">800</div></div>
<div class="a" style="left:112px;top:721.5px;width:4px;height:1px;background:#c0bfc8"></div>
<div class="a" style="left:111px;top:732.3px;width:5px;height:1px;background:#c0bfc8"></div>
<div class="a" style="left:112px;top:743.2px;width:4px;height:1px;background:#c0bfc8"></div>
<div class="a" style="left:92px;top:754.0px;width:25px;height:1px;background:#d6d5de"></div>
<div class="t" style="left:97px;top:760.0px;width:14px;height:21.3px;"><div class="t" style="left:0;top:21.3px;font-size:12px;color:#55555f;transform:rotate(-90deg) scaleX(1.065);transform-origin:0 0">900</div></div>
<div class="a" style="left:112px;top:764.9px;width:4px;height:1px;background:#c0bfc8"></div>
<div class="a" style="left:111px;top:775.8px;width:5px;height:1px;background:#c0bfc8"></div>
<div class="a" style="left:112px;top:786.6px;width:4px;height:1px;background:#c0bfc8"></div>
<div class="a" style="left:92px;top:797.5px;width:25px;height:1px;background:#d6d5de"></div>
<div class="t" style="left:97px;top:803.5px;width:14px;height:28.4px;"><div class="t" style="left:0;top:28.4px;font-size:12px;color:#55555f;transform:rotate(-90deg) scaleX(1.065);transform-origin:0 0">1000</div></div>
<div class="a" style="left:112px;top:808.4px;width:4px;height:1px;background:#c0bfc8"></div>
<div class="a" style="left:111px;top:819.2px;width:5px;height:1px;background:#c0bfc8"></div>
<div class="a" style="left:112px;top:830.1px;width:4px;height:1px;background:#c0bfc8"></div>
<div class="a" style="left:92px;top:841.0px;width:25px;height:1px;background:#d6d5de"></div>
<div class="t" style="left:97px;top:847.0px;width:14px;height:27.5px;"><div class="t" style="left:0;top:27.5px;font-size:12px;color:#55555f;transform:rotate(-90deg) scaleX(1.065);transform-origin:0 0">1100</div></div>
<div class="a" style="left:112px;top:851.8px;width:4px;height:1px;background:#c0bfc8"></div>
<div class="a" style="left:111px;top:862.7px;width:5px;height:1px;background:#c0bfc8"></div>
<div class="a" style="left:112px;top:873.5px;width:4px;height:1px;background:#c0bfc8"></div>
<div class="a" style="left:91px;top:848px;width:27px;height:40px;background:#f0eef5"></div>
<div class="t" style="left:34.15px;top:330.84px;font-size:12px;color:#565662;font-weight:bold;transform:scaleX(1.0107);transform-origin:0 0;">Дизайн</div>
<div class="t" style="left:27.12px;top:402.84px;font-size:12px;color:#565662;font-weight:bold;transform:scaleX(0.9788);transform-origin:0 0;">Елементи</div>
<div class="t" style="left:40.99px;top:475.84px;font-size:12px;color:#565662;font-weight:bold;transform:scaleX(0.9179);transform-origin:0 0;">Текст</div>
<div class="t" style="left:37.75px;top:548.84px;font-size:12px;color:#565662;font-weight:bold;transform:scaleX(0.9311);transform-origin:0 0;">Бренд</div>
<div class="t" style="left:28.91px;top:621.54px;font-size:12px;color:#565662;font-weight:bold;transform:scaleX(0.9824);transform-origin:0 0;">Передані</div>
<div class="t" style="left:19.05px;top:694.54px;font-size:12px;color:#565662;font-weight:bold;transform:scaleX(1.0004);transform-origin:0 0;">Інструменти</div>
<div class="t" style="left:31.11px;top:766.84px;font-size:12px;color:#565662;font-weight:bold;transform:scaleX(0.9932);transform-origin:0 0;">Проєкти</div>
<div class="t" style="left:31.20px;top:840.54px;font-size:12px;color:#565662;font-weight:bold;transform:scaleX(0.9995);transform-origin:0 0;">Додатки</div>
<svg style="left:45px;top:298px" width="20" height="20"><rect x="1.5" y="1.5" width="17" height="17" rx="4" stroke="#4b4b57" stroke-width="1.7" fill="none"/><path d="M11 1.5 V18.5 M11 8.5 H18.5" stroke="#4b4b57" stroke-width="1.7" fill="none"/></svg>
<svg style="left:45px;top:370px" width="20" height="20"><path d="M5.2 8.5 L1.8 5.2 A2 2 0 0 1 5.2 2.3 A2 2 0 0 1 8.6 5.2 Z" stroke="#4b4b57" stroke-width="1.7" fill="none"/><path d="M14.5 1.5 L18.5 8.5 H10.5 Z" stroke="#4b4b57" stroke-width="1.7" fill="none" stroke-linejoin="round"/><rect x="1.5" y="11.5" width="7" height="7" rx="1" stroke="#4b4b57" stroke-width="1.7" fill="none"/><circle cx="14.5" cy="15" r="3.6" stroke="#4b4b57" stroke-width="1.7" fill="none"/></svg>
<svg style="left:45px;top:443px" width="20" height="20"><path d="M2.5 4.5 V2 H17.5 V4.5 M10 2 V18 M6.5 18 H13.5" stroke="#4b4b57" stroke-width="1.7" fill="none"/></svg>
<svg style="left:69px;top:503px" width="12" height="10"><path d="M0.5 2 L3.5 4.5 L6 0.5 L8.5 4.5 L11.5 2 L10.5 8 H1.5 Z" fill="#f5b544"/></svg>
<svg style="left:45px;top:516px" width="20" height="21"><path d="M4.5 8 Q10 3.5 15.5 8" stroke="#4b4b57" stroke-width="1.7" fill="none"/><path d="M6.5 5 Q10 2.2 13.5 5" stroke="#4b4b57" stroke-width="1.7" fill="none"/><rect x="2" y="9.5" width="16" height="9" rx="3" stroke="#4b4b57" stroke-width="1.7" fill="none"/><path d="M8.6 12 A2 2 0 1 0 8.6 16" stroke="#4b4b57" stroke-width="1.4" fill="none"/><ellipse cx="12.2" cy="14" rx="1.8" ry="2" stroke="#4b4b57" stroke-width="1.4" fill="none"/></svg>
<svg style="left:45px;top:590px" width="21" height="19"><path d="M7 16.5 H5.5 A4.5 4.5 0 0 1 4.7 7.6 A6.2 6.2 0 0 1 16.6 6.5 A4.8 4.8 0 0 1 15.5 16.5 H14" stroke="#4b4b57" stroke-width="1.7" fill="none"/><path d="M10.5 17.5 V9 M7.2 12 L10.5 8.7 L13.8 12" stroke="#4b4b57" stroke-width="1.7" fill="none"/></svg>
<svg style="left:45px;top:661px" width="21" height="20"><path d="M7 12.5 L14.5 2.5 A2 2 0 0 1 17.8 5 L10.3 15 L6.5 16 Z" stroke="#4b4b57" stroke-width="1.7" fill="none"/><path d="M1.5 18.5 H19 M3.5 14.5 H7" stroke="#4b4b57" stroke-width="1.7" fill="none"/></svg>
<svg style="left:45px;top:735px" width="20" height="19"><path d="M1.5 4 A2.5 2.5 0 0 1 4 1.5 H7.5 L9.5 4 H16 A2.5 2.5 0 0 1 18.5 6.5 V15 A2.5 2.5 0 0 1 16 17.5 H4 A2.5 2.5 0 0 1 1.5 15 Z M1.5 7 H18.5" stroke="#4b4b57" stroke-width="1.7" fill="none"/></svg>
<svg style="left:45px;top:808px" width="20" height="20"><rect x="1.5" y="1.5" width="6.5" height="6.5" rx="2" stroke="#4b4b57" stroke-width="1.7" fill="none"/><rect x="12" y="1.5" width="6.5" height="6.5" rx="2" stroke="#4b4b57" stroke-width="1.7" fill="none"/><rect x="1.5" y="12" width="6.5" height="6.5" rx="2" stroke="#4b4b57" stroke-width="1.7" fill="none"/><path d="M15.2 11.5 V19 M11.5 15.2 H19" stroke="#4b4b57" stroke-width="1.7" fill="none"/></svg>
<div class="a" style="left:27px;top:872px;width:56px;height:1px;background:#d6d5de"></div>
<div class="a" style="left:425px;top:362px;width:834px;height:470px;background:#f4f0eb;box-shadow:2px 2px 12px rgba(60,60,90,.10)"></div>
<div class="a" style="left:425px;top:421.5px;width:18px;height:140.5px;background:#3e69ad"></div>
<div class="t" style="left:474.55px;top:369.39px;font-size:81px;color:#3e69ad;transform:scaleX(0.9441);transform-origin:0 0;">Коваленко</div>
<div class="t" style="left:531.24px;top:438.04px;font-size:80px;color:#3e69ad;transform:scaleX(0.9470);transform-origin:0 0;">Карина</div>
<div class="t" style="left:490.70px;top:539.87px;font-size:14.2px;color:#252525;transform:scaleX(1.0191);transform-origin:0 0;">АНДРІЇВСЬКИЙ ЛІЦЕЙ КАРПІВСЬКОЇ</div>
<div class="t" style="left:486.07px;top:559.97px;font-size:14.2px;color:#252525;transform:scaleX(1.0013);transform-origin:0 0;">СІЛЬСЬКОЇ РАДИ КРИВОРІЗЬКИЙ Р-Н,</div>
<div class="t" style="left:524.40px;top:580.17px;font-size:14.2px;color:#252525;transform:scaleX(1.0020);transform-origin:0 0;">ДНІПРОПЕТРОВСЬКА ОБЛ.</div>
<div class="a" style="left:853.6px;top:402px;width:392.4px;height:259.5px;border-radius:16px;background:#c65c66"></div>
<div class="t" style="left:929.92px;top:412.73px;font-size:18.5px;color:#f8eee6;font-weight:bold;transform:scaleX(1.0412);transform-origin:0 0;-webkit-text-stroke:0.35px #f8eee6;">ОСОБЛИВУ УВАГУ ПРИДІЛЯЛА:</div>
<div class="t" style="left:894.52px;top:443.93px;font-size:18.5px;color:#f8eee6;font-weight:bold;transform:scaleX(1.0502);transform-origin:0 0;-webkit-text-stroke:0.35px #f8eee6;">ВИКОРИСТАННЮ ІНТЕРАКТИВНИХ</div>
<div class="a" style="left:859.7px;top:451.1px;width:6px;height:6px;border-radius:50%;background:#f8eee6"></div>
<div class="t" style="left:1136.81px;top:476.23px;font-size:18.5px;color:#f8eee6;font-weight:bold;transform:scaleX(1.0564);transform-origin:0 0;-webkit-text-stroke:0.35px #f8eee6;">МЕТОДІВ;</div>
<div class="t" style="left:901.21px;top:508.13px;font-size:18.5px;color:#f8eee6;font-weight:bold;transform:scaleX(1.0410);transform-origin:0 0;-webkit-text-stroke:0.35px #f8eee6;">ЗАЛУЧЕННЮ УЧНІВ ДО АКТИВНОЇ</div>
<div class="a" style="left:859.7px;top:515.3px;width:6px;height:6px;border-radius:50%;background:#f8eee6"></div>
<div class="t" style="left:1144.84px;top:539.93px;font-size:18.5px;color:#f8eee6;font-weight:bold;transform:scaleX(1.0314);transform-origin:0 0;-webkit-text-stroke:0.35px #f8eee6;">РОБОТИ;</div>
<div class="t" style="left:970.87px;top:572.53px;font-size:18.5px;color:#f8eee6;font-weight:bold;transform:scaleX(1.0419);transform-origin:0 0;-webkit-text-stroke:0.35px #f8eee6;">ДИФЕРЕНЦІАЦІЇ ЗАВДАНЬ;</div>
<div class="a" style="left:859.7px;top:579.7px;width:6px;height:6px;border-radius:50%;background:#f8eee6"></div>
<div class="t" style="left:960.34px;top:604.13px;font-size:18.5px;color:#f8eee6;font-weight:bold;transform:scaleX(1.0587);transform-origin:0 0;-webkit-text-stroke:0.35px #f8eee6;">ФОРМУВАННЮ КЛЮЧОВИХ</div>
<div class="a" style="left:859.7px;top:611.3px;width:6px;height:6px;border-radius:50%;background:#f8eee6"></div>
<div class="t" style="left:1029.45px;top:635.13px;font-size:18.5px;color:#f8eee6;font-weight:bold;transform:scaleX(1.0242);transform-origin:0 0;-webkit-text-stroke:0.35px #f8eee6;">КОМПЕТЕНТНОСТЕЙ.</div>
<div class="a" style="left:638px;top:307.5px;width:408px;height:39px;border-radius:9px;background:#fff;box-shadow:0 1px 4px rgba(40,40,80,.14)"></div>
<svg style="left:649px;top:317px" width="18" height="19"><path d="M1 3.5 H17 M6 3.5 V1.5 H12 V3.5 M3 3.5 L4 18 H14 L15 3.5 M7 7 V14.5 M11 7 V14.5" stroke="#1f1f2a" stroke-width="1.7" fill="none"/></svg>
<div class="a" style="left:682px;top:318px;width:1px;height:18px;background:#dcdce2"></div>
<div class="a" style="left:767.3px;top:318px;width:1px;height:18px;background:#dcdce2"></div>
<div class="a" style="left:815.8px;top:318px;width:1px;height:18px;background:#dcdce2"></div>
<div class="a" style="left:912px;top:318px;width:1px;height:18px;background:#dcdce2"></div>
<svg style="left:696.5px;top:317px" width="20" height="20"><circle cx="10" cy="10" r="8.8" stroke="#1f1f2a" stroke-width="1.7" fill="none"/><path d="M10 5 V10 L13.5 13.5" stroke="#1f1f2a" stroke-width="1.7" fill="none"/></svg>
<div class="t" style="left:722.94px;top:319.37px;font-size:15.5px;color:#1f1f2a;font-weight:bold;transform:scaleX(0.9532);transform-origin:0 0;">5.0с</div>
<div class="a" style="left:779.3px;top:314.7px;width:24px;height:24px;border-radius:50%;background:#f4f0eb;border:1px solid #d9d6d2"></div>
<div class="t" style="left:832.24px;top:319.37px;font-size:15.5px;color:#1f1f2a;font-weight:bold;transform:scaleX(0.9570);transform-origin:0 0;">Анімація</div>
<div class="t" style="left:928.03px;top:319.37px;font-size:15.5px;color:#1f1f2a;font-weight:bold;transform:scaleX(0.9670);transform-origin:0 0;">Розташування</div>
<div class="a" style="left:472px;top:613px;width:416px;height:192px;background:#1c1b1d;overflow:hidden">
<div class="a" style="left:0px;top:0px;width:406px;height:5.5px;background:#c8d2e4;"></div>
<div class="a" style="left:406px;top:0px;width:10px;height:192px;background:linear-gradient(180deg,#7f8c98 0%,#9aa2a6 25%,#c39a6a 40%,#a08870 55%,#4e5e5c 70%,#3e4a48 100%);"></div>
<div class="a" style="left:7px;top:10.5px;width:394px;height:12.5px;background:#38383c;border-radius:3px;"></div>
<div class="a" style="left:12px;top:13px;width:8px;height:8px;background:#7a55d8;border-radius:50%;"></div>
<div class="a" style="left:26px;top:15.5px;width:58px;height:3px;background:#b8b8be;"></div>
<div class="a" style="left:7px;top:34.5px;width:287px;height:127px;background:radial-gradient(ellipse 30% 45% at 8% 95%,rgba(80,130,200,.75),transparent 70%),radial-gradient(ellipse 35% 40% at 95% 92%,rgba(90,150,220,.9),transparent 70%),linear-gradient(180deg,#0a1230 0%,#0f1f48 60%,#18386e 100%);"></div>
<div class="a" style="left:15px;top:96px;width:13px;height:8px;background:rgba(170,190,230,.45);border-radius:50%;"></div>
<div class="a" style="left:263px;top:93px;width:12px;height:4px;background:#e0d0a0;border-radius:50%;"></div>
<div class="a" style="left:266px;top:90px;width:6px;height:6px;background:#f0e0a0;border-radius:50%;"></div>
<div class="a" style="left:264px;top:136px;width:3px;height:3px;background:#fff;border-radius:50%;"></div>
<div class="a" style="left:294px;top:34.5px;width:2px;height:127px;background:#e6e6ee;"></div>
<div class="a" style="left:57px;top:35px;width:184px;height:125.5px;background:#f4f4f6;border-left:2px solid #9a9aa4;border-right:2px solid #9a9aa4"></div>
<div class="a" style="left:79px;top:38.5px;width:140px;height:1.2px;background:#9a9ab0;"></div>
<div class="a" style="left:63px;top:47.5px;width:169px;height:1.6px;background:rgba(50,50,60,.5);"></div>
<div class="a" style="left:63px;top:52px;width:85px;height:1.6px;background:rgba(50,50,60,.5);"></div>
<div class="a" style="left:63px;top:58.5px;width:169px;height:1.6px;background:rgba(50,50,60,.5);"></div>
<div class="a" style="left:63px;top:63.5px;width:167px;height:1.6px;background:rgba(50,50,60,.5);"></div>
<div class="a" style="left:63px;top:68.5px;width:155px;height:1.6px;background:rgba(50,50,60,.5);"></div>
<div class="a" style="left:63px;top:75.5px;width:155px;height:1.6px;background:rgba(50,50,60,.5);"></div>
<div class="a" style="left:63px;top:80.5px;width:153px;height:1.6px;background:rgba(50,50,60,.5);"></div>
<div class="a" style="left:67.7px;top:87.5px;width:162.6px;height:73px;background:radial-gradient(ellipse 40% 50% at 90% 80%,rgba(60,90,160,.45),transparent 70%),#27234e;border-radius:3px 3px 0 0;"></div>
<div class="a" style="left:121px;top:87.5px;width:51.7px;height:17.5px;background:radial-gradient(ellipse 50% 100% at 50% 0%,#f6f4e6 60%,#e4e2c0 100%);border-radius:0 0 26px 26px / 0 0 17.5px 17.5px;"></div>
<svg style="left:67.70000000000005px;top:100px" width="170" height="40"><path d="M0 12 Q81 52 163 9" stroke="#c8c8d8" stroke-width="1" fill="none"/></svg>
<div class="a" style="left:82.9px;top:116.5px;width:9px;height:9px;background:#3aa6b6;border-radius:50%;"></div>
<div class="a" style="left:88.9px;top:113px;width:3px;height:3px;background:#ddd;border-radius:50%;"></div>
<div class="a" style="left:96.0px;top:121.7px;width:9px;height:9px;background:#3aa6b6;border-radius:50%;"></div>
<div class="a" style="left:102.0px;top:118.2px;width:3px;height:3px;background:#ddd;border-radius:50%;"></div>
<div class="a" style="left:111.8px;top:125.3px;width:9px;height:9px;background:#3aa6b6;border-radius:50%;"></div>
<div class="a" style="left:117.8px;top:121.8px;width:3px;height:3px;background:#ddd;border-radius:50%;"></div>
<div class="a" style="left:127.8px;top:127.5px;width:9px;height:9px;background:#3aa6b6;border-radius:50%;"></div>
<div class="a" style="left:133.8px;top:124px;width:3px;height:3px;background:#ddd;border-radius:50%;"></div>
<div class="a" style="left:143.9px;top:127.8px;width:9px;height:9px;background:#3aa6b6;border-radius:50%;"></div>
<div class="a" style="left:149.9px;top:124.3px;width:3px;height:3px;background:#ddd;border-radius:50%;"></div>
<div class="a" style="left:159.5px;top:127.2px;width:9px;height:9px;background:#3aa6b6;border-radius:50%;"></div>
<div class="a" style="left:165.5px;top:123.7px;width:3px;height:3px;background:#ddd;border-radius:50%;"></div>
<div class="a" style="left:175.5px;top:124.6px;width:9px;height:9px;background:#3aa6b6;border-radius:50%;"></div>
<div class="a" style="left:181.5px;top:121.1px;width:3px;height:3px;background:#ddd;border-radius:50%;"></div>
<div class="a" style="left:191.1px;top:121.0px;width:9px;height:9px;background:#3aa6b6;border-radius:50%;"></div>
<div class="a" style="left:197.1px;top:117.5px;width:3px;height:3px;background:#ddd;border-radius:50%;"></div>
<div class="a" style="left:205.5px;top:115.5px;width:9px;height:9px;background:#3aa6b6;border-radius:50%;"></div>
<div class="a" style="left:211.5px;top:112px;width:3px;height:3px;background:#ddd;border-radius:50%;"></div>
<div class="a" style="left:67.7px;top:146px;width:162.6px;height:1.2px;background:#4a4a70;"></div>
<div class="a" style="left:67.7px;top:147.2px;width:162.6px;height:13.3px;background:#1e1c3c;"></div>
<div class="a" style="left:81.5px;top:149.9px;width:6.6px;height:6.6px;background:#6a6a78;border-radius:50%;"></div>
<div class="a" style="left:97.6px;top:149.9px;width:6.6px;height:6.6px;background:#a8a8b4;border-radius:50%;"></div>
<div class="a" style="left:113.7px;top:149.9px;width:6.6px;height:6.6px;background:#c0c0c8;border-radius:50%;"></div>
<div class="a" style="left:129.8px;top:149.9px;width:6.6px;height:6.6px;background:#e0e0e8;border-radius:50%;"></div>
<div class="a" style="left:145.9px;top:149.9px;width:6.6px;height:6.6px;background:#eeeef4;border-radius:50%;"></div>
<div class="a" style="left:162.0px;top:149.9px;width:6.6px;height:6.6px;background:#e0e0e8;border-radius:50%;"></div>
<div class="a" style="left:178.1px;top:149.9px;width:6.6px;height:6.6px;background:#c0c0c8;border-radius:50%;"></div>
<div class="a" style="left:194.2px;top:149.9px;width:6.6px;height:6.6px;background:#a8a8b4;border-radius:50%;"></div>
<div class="a" style="left:210.3px;top:149.9px;width:6.6px;height:6.6px;background:#6a6a78;border-radius:50%;"></div>
<div class="a" style="left:300px;top:31.4px;width:100.5px;height:64.6px;background:#2c2a2e;border-radius:3px;;border:1px solid #a8b4d0;overflow:hidden"></div>
<div class="a" style="left:301px;top:32.4px;width:34px;height:62.6px;background:#b8b0a6;"></div>
<div class="a" style="left:333px;top:32.4px;width:13px;height:62.6px;background:#d8d0c2;"></div>
<div class="a" style="left:346px;top:47px;width:52px;height:48px;background:#26252a;"></div>
<div class="a" style="left:334px;top:52px;width:36px;height:40px;background:#5a4a40;border-radius:16px 16px 4px 4px;"></div>
<div class="a" style="left:337px;top:60px;width:31px;height:33px;background:#c4a494;border-radius:14px 14px 12px 12px;"></div>
<div class="a" style="left:364px;top:87px;width:22px;height:8px;background:#7a9ab8;border-radius:4px 4px 0 0;"></div>
<div class="a" style="left:304px;top:87px;width:40px;height:2.5px;background:rgba(255,255,255,.8);"></div>
<div class="a" style="left:299.5px;top:100px;width:49px;height:64.7px;background:#3c3b40;border-radius:3px;"></div>
<div class="a" style="left:309px;top:122px;width:14px;height:12px;background:#6a4060;border-radius:50%;"></div>
<div class="a" style="left:321px;top:122px;width:13px;height:12px;background:#b09090;border-radius:50%;"></div>
<div class="a" style="left:311px;top:141px;width:25px;height:2.2px;background:rgba(230,230,230,.8);"></div>
<div class="a" style="left:352px;top:100px;width:48.5px;height:64.7px;background:#6c2a86;border-radius:3px;"></div>
<div class="a" style="left:365px;top:121.4px;width:22px;height:22px;background:#a452c4;border-radius:50%;"></div>
<div class="t" style="left:371.5px;top:127.5px;font-size:11px;color:#fff;">Л</div>
<div class="a" style="left:356px;top:157px;width:35px;height:2.2px;background:rgba(240,240,240,.85);"></div>
<div class="a" style="left:9.8px;top:179.5px;width:12px;height:2.5px;background:#d0d0d4;"></div>
<div class="a" style="left:26px;top:179px;width:1px;height:4px;background:#888;"></div>
<div class="a" style="left:30px;top:179.5px;width:31px;height:2.5px;background:#b8b8bc;"></div>
<div class="a" style="left:118px;top:173px;width:27px;height:15px;background:#7a1c1c;border-radius:4px;"></div>
<div class="a" style="left:130.3px;top:173px;width:14.4px;height:15px;background:#f4d0d0;border-radius:4px;"></div>
<div class="a" style="left:146.6px;top:173px;width:27.4px;height:15px;background:#7a1c1c;border-radius:4px;"></div>
<div class="a" style="left:159.4px;top:173px;width:14.6px;height:15px;background:#f4d0d0;border-radius:4px;"></div>
<div class="a" style="left:177px;top:173px;width:16px;height:15px;background:#38373c;border-radius:8px;"></div>
<div class="a" style="left:182px;top:178px;width:6px;height:5px;background:transparent;border-radius:1px;;border:1px solid #ccc"></div>
<div class="a" style="left:196.7px;top:173px;width:16px;height:15px;background:#38373c;border-radius:8px;"></div>
<div class="a" style="left:201.7px;top:178px;width:6px;height:5px;background:transparent;border-radius:1px;;border:1px solid #ccc"></div>
<div class="a" style="left:216px;top:173px;width:16px;height:15px;background:#38373c;border-radius:8px;"></div>
<div class="a" style="left:221px;top:178px;width:6px;height:5px;background:transparent;border-radius:1px;;border:1px solid #ccc"></div>
<div class="a" style="left:235.7px;top:173px;width:16px;height:15px;background:#38373c;border-radius:8px;"></div>
<div class="a" style="left:240.7px;top:178px;width:6px;height:5px;background:transparent;border-radius:1px;;border:1px solid #ccc"></div>
<div class="a" style="left:255px;top:173px;width:10px;height:15px;background:#38373c;border-radius:5px;"></div>
<div class="a" style="left:268px;top:173px;width:22.3px;height:15px;background:#de2e2e;border-radius:8px;"></div>
<div class="a" style="left:332.5px;top:177px;width:7px;height:7px;background:transparent;border-radius:50%;;border:1.2px solid #ddd"></div>
<div class="a" style="left:347.2px;top:177px;width:7px;height:7px;background:transparent;border-radius:50%;;border:1.2px solid #ddd"></div>
<div class="a" style="left:361.5px;top:177px;width:7px;height:7px;background:transparent;border-radius:50%;;border:1.2px solid #ddd"></div>
<div class="a" style="left:376.2px;top:177px;width:7px;height:7px;background:transparent;border-radius:50%;;border:1.2px solid #ddd"></div>
<div class="a" style="left:390.5px;top:177px;width:7px;height:7px;background:transparent;border-radius:50%;;border:1.2px solid #ddd"></div>
<div class="a" style="left:0px;top:171px;width:2px;height:6px;background:#bbb;"></div>
</div>
<div class="a" style="left:108.75px;top:860.5px;width:113.5px;height:40px;border-radius:7px 7px 0 0;background:linear-gradient(90deg,#bcb8b8 0%,#c9bcc4 38%,#8f7cc0 55%,#4a6ab2 75%,#3f66ae 100%);box-shadow:0 0 0 1px rgba(0,0,0,.07);overflow:hidden">
<div class="a" style="left:0;top:14px;width:60px;height:30px;background:radial-gradient(ellipse at 40% 100%,rgba(230,90,80,.8),transparent 70%)"></div>
<div class="t" style="left:10.60px;top:3.34px;font-size:12px;color:#f6f0f2;transform:scaleX(1.0634);transform-origin:0 0;">Загальний звіт</div>
<div class="t" style="left:9.95px;top:14.84px;font-size:12px;color:#f6f0f2;transform:scaleX(1.1280);transform-origin:0 0;">по виробничій</div>
</div>
<div class="a" style="left:240.5px;top:860.5px;width:113.5px;height:40px;border-radius:7px 7px 0 0;background:#3f68b0;box-shadow:0 0 0 1px rgba(0,0,0,.07);overflow:hidden">
<div class="t" style="left:15.07px;top:2.54px;font-size:12px;color:#fff;transform:scaleX(0.8694);transform-origin:0 0;">Список групи</div>
<div class="a" style="left:16px;top:22px;width:22px;height:1px;background:#b8c8e4"></div><div class="a" style="left:75px;top:21px;width:3px;height:3px;background:#dde"></div><div class="a" style="left:82px;top:22px;width:18px;height:1px;background:#b8c8e4"></div>
</div>
<div class="a" style="left:370.7px;top:860.5px;width:113.5px;height:40px;border-radius:7px 7px 0 0;background:#f4f0eb;box-shadow:0 0 0 1px rgba(0,0,0,.07);overflow:hidden">
<div class="a" style="left:0.8px;top:9px;width:1.6px;height:31px;background:#5574ad"></div>
<div class="t" style="left:5.59px;top:2.54px;font-size:12px;color:#5574ad;transform:scaleX(0.8381);transform-origin:0 0;">Засульська</div>
<div class="t" style="left:5.90px;top:11.54px;font-size:12px;color:#5574ad;transform:scaleX(0.8689);transform-origin:0 0;">Антоніна</div>
<div class="a" style="left:76.5px;top:0;width:37px;height:40px;background:#2f5a4a"></div>
<div class="a" style="left:80px;top:6px;width:32px;height:16px;background:repeating-linear-gradient(180deg,#c8b060 0 3px,#3a5a48 3px 5px)"></div>
<div class="a" style="left:77px;top:18px;width:10px;height:10px;background:#c8d0d8"></div>
<div class="a" style="left:76.5px;top:0;width:37px;height:2px;background:#ddd"></div>
</div>
<div class="a" style="left:502.5px;top:860.5px;width:113.5px;height:40px;border-radius:7px 7px 0 0;background:#f4f0eb;box-shadow:0 0 0 1px rgba(0,0,0,.07);overflow:hidden">
<div class="a" style="left:0.8px;top:9px;width:1.6px;height:31px;background:#5574ad"></div>
<div class="t" style="left:6.90px;top:-0.46px;font-size:12px;color:#5574ad;transform:scaleX(0.8800);transform-origin:0 0;">Доронкіна</div>
<div class="t" style="left:16.70px;top:8.34px;font-size:12px;color:#5574ad;transform:scaleX(0.9097);transform-origin:0 0;">Марія</div>
<div class="a" style="left:58px;top:6px;width:48px;height:34px;border-radius:3px;background:#8a7fc2"></div>
<div class="a" style="left:62px;top:8.0px;width:41px;height:1px;background:rgba(255,255,255,.45)"></div><div class="a" style="left:62px;top:11.0px;width:41px;height:1px;background:rgba(255,255,255,.45)"></div><div class="a" style="left:62px;top:14.0px;width:41px;height:1px;background:rgba(255,255,255,.45)"></div><div class="a" style="left:62px;top:17.0px;width:41px;height:1px;background:rgba(255,255,255,.45)"></div><div class="a" style="left:62px;top:20.0px;width:41px;height:1px;background:rgba(255,255,255,.45)"></div><div class="a" style="left:62px;top:23.0px;width:41px;height:1px;background:rgba(255,255,255,.45)"></div>
<div class="a" style="left:10px;top:23.0px;width:37px;height:1px;background:#b8b4bc"></div><div class="a" style="left:10px;top:24.8px;width:37px;height:1px;background:#b8b4bc"></div>
</div>
<div class="a" style="left:634px;top:860.5px;width:113.5px;height:40px;border-radius:7px 7px 0 0;background:#f4f0eb;box-shadow:0 0 0 1px rgba(0,0,0,.07);overflow:hidden">
<div class="a" style="left:0.8px;top:9px;width:1.6px;height:31px;background:#5574ad"></div>
<div class="t" style="left:13.86px;top:-0.46px;font-size:12px;color:#5574ad;transform:scaleX(0.8435);transform-origin:0 0;">Кацуба</div>
<div class="t" style="left:15.88px;top:8.74px;font-size:12px;color:#5574ad;transform:scaleX(0.8308);transform-origin:0 0;">Олена</div>
<div class="a" style="left:56.4px;top:4.4px;width:46.199999999999996px;height:7.4px;border-radius:3px;background:#8a7fc2"></div>
<div class="a" style="left:46.5px;top:14.3px;width:63.8px;height:25.7px;border-radius:3px;background:#c95d67"></div>
<div class="a" style="left:50px;top:16.0px;width:58px;height:1px;background:rgba(255,255,255,.4)"></div><div class="a" style="left:50px;top:18.6px;width:58px;height:1px;background:rgba(255,255,255,.4)"></div><div class="a" style="left:50px;top:21.2px;width:58px;height:1px;background:rgba(255,255,255,.4)"></div><div class="a" style="left:50px;top:23.8px;width:58px;height:1px;background:rgba(255,255,255,.4)"></div>
<div class="a" style="left:22px;top:23.0px;width:24px;height:1px;background:#b8b4bc"></div><div class="a" style="left:22px;top:24.8px;width:24px;height:1px;background:#b8b4bc"></div>
</div>
<div class="a" style="left:765.5px;top:860.5px;width:113.5px;height:40px;border-radius:7px 7px 0 0;background:#f4f0eb;box-shadow:0 0 0 1px rgba(0,0,0,.07);overflow:hidden">
<div class="a" style="left:0.8px;top:11px;width:1.6px;height:29px;background:#5574ad"></div>
<div class="t" style="left:0.60px;top:-0.46px;font-size:12px;color:#5574ad;transform:scaleX(0.8122);transform-origin:0 0;">Хлус Марина</div>
<div class="a" style="left:66.8px;top:1.5px;width:44.0px;height:8.2px;border-radius:3px;background:#8a7fc2"></div>
<div class="a" style="left:46.5px;top:17.6px;width:64.3px;height:22.4px;border-radius:3px;background:#c95d67"></div>
<div class="a" style="left:50px;top:19.0px;width:58px;height:1px;background:rgba(255,255,255,.4)"></div><div class="a" style="left:50px;top:21.6px;width:58px;height:1px;background:rgba(255,255,255,.4)"></div><div class="a" style="left:50px;top:24.2px;width:58px;height:1px;background:rgba(255,255,255,.4)"></div><div class="a" style="left:50px;top:26.8px;width:58px;height:1px;background:rgba(255,255,255,.4)"></div>
<div class="a" style="left:8px;top:12.0px;width:27px;height:1px;background:#b8b4bc"></div><div class="a" style="left:8px;top:14.2px;width:27px;height:1px;background:#b8b4bc"></div><div class="a" style="left:8px;top:16.4px;width:27px;height:1px;background:#b8b4bc"></div><div class="a" style="left:8px;top:18.6px;width:27px;height:1px;background:#b8b4bc"></div><div class="a" style="left:8px;top:20.8px;width:27px;height:1px;background:#b8b4bc"></div>
<div class="a" style="left:13px;top:25px;width:32px;height:15px;background:#5a4a3e"></div>
</div>
<div class="a" style="left:895.7px;top:860.5px;width:113.5px;height:40px;border-radius:7px 7px 0 0;background:#f4f0eb;box-shadow:0 0 0 1px rgba(0,0,0,.07);overflow:hidden">
<div class="a" style="left:0.8px;top:9px;width:1.6px;height:31px;background:#5574ad"></div>
<div class="t" style="left:12.05px;top:0.04px;font-size:12px;color:#5574ad;transform:scaleX(0.8614);transform-origin:0 0;">Берекет</div>
<div class="t" style="left:16.68px;top:8.74px;font-size:12px;color:#5574ad;transform:scaleX(0.8392);transform-origin:0 0;">Олена</div>
<div class="a" style="left:79.8px;top:6.4px;width:9.900000000000006px;height:4.9px;border-radius:3px;background:#8a7fc2"></div>
<div class="a" style="left:59.5px;top:20.5px;width:52.8px;height:19.5px;border-radius:3px;background:#c95d67"></div>
<div class="a" style="left:62px;top:22.0px;width:48px;height:1px;background:rgba(255,255,255,.4)"></div><div class="a" style="left:62px;top:24.6px;width:48px;height:1px;background:rgba(255,255,255,.4)"></div><div class="a" style="left:62px;top:27.2px;width:48px;height:1px;background:rgba(255,255,255,.4)"></div>
<div class="a" style="left:6.7px;top:22.5px;width:40.3px;height:1px;background:#c0bcc4"></div>
</div>
<div class="a" style="left:1027.5px;top:860.5px;width:113.5px;height:40px;border-radius:7px 7px 0 0;background:#f4f0eb;box-shadow:0 0 0 1px rgba(0,0,0,.07);overflow:hidden">
<div class="a" style="left:0.8px;top:9px;width:1.6px;height:31px;background:#5574ad"></div>
<div class="t" style="left:19.30px;top:-0.46px;font-size:12px;color:#5574ad;transform:scaleX(0.8714);transform-origin:0 0;">Літун</div>
<div class="t" style="left:12.76px;top:8.34px;font-size:12px;color:#5574ad;transform:scaleX(0.8432);transform-origin:0 0;">Наталія</div>
<div class="a" style="left:66.8px;top:6px;width:21.400000000000006px;height:5.5px;border-radius:3px;background:#8a7fc2"></div>
<div class="a" style="left:64.6px;top:16.8px;width:47.400000000000006px;height:23.2px;border-radius:3px;background:#c95d67"></div>
<div class="a" style="left:55.5px;top:25px;width:56.5px;height:15px;border-radius:3px;background:#c95d67"></div>
<div class="a" style="left:67px;top:19.0px;width:43px;height:1px;background:rgba(255,255,255,.45)"></div><div class="a" style="left:67px;top:21.6px;width:43px;height:1px;background:rgba(255,255,255,.45)"></div><div class="a" style="left:67px;top:24.2px;width:43px;height:1px;background:rgba(255,255,255,.45)"></div><div class="a" style="left:67px;top:26.8px;width:43px;height:1px;background:rgba(255,255,255,.45)"></div>
<div class="a" style="left:10px;top:22.0px;width:35px;height:1px;background:#aaa6b0"></div><div class="a" style="left:10px;top:24.0px;width:35px;height:1px;background:#aaa6b0"></div>
</div>
<div class="a" style="left:1158.75px;top:860.5px;width:113.5px;height:40px;border-radius:7px 7px 0 0;background:#f4f0eb;box-shadow:0 0 0 1px rgba(0,0,0,.07);overflow:hidden">
<div class="a" style="left:0.8px;top:9px;width:1.6px;height:31px;background:#5574ad"></div>
<div class="t" style="left:5.73px;top:-0.46px;font-size:12px;color:#5574ad;transform:scaleX(0.8764);transform-origin:0 0;">Коваленко</div>
<div class="t" style="left:13.22px;top:8.74px;font-size:12px;color:#5574ad;transform:scaleX(0.8861);transform-origin:0 0;">Карина</div>
<div class="a" style="left:58.6px;top:4.7px;width:50.699999999999996px;height:35.3px;border-radius:2px;background:#c95d67"></div>
<div class="a" style="left:62px;top:7.0px;width:45px;height:1px;background:rgba(255,255,255,.45)"></div><div class="a" style="left:62px;top:10.5px;width:45px;height:1px;background:rgba(255,255,255,.45)"></div><div class="a" style="left:62px;top:14.0px;width:45px;height:1px;background:rgba(255,255,255,.45)"></div><div class="a" style="left:62px;top:17.5px;width:45px;height:1px;background:rgba(255,255,255,.45)"></div><div class="a" style="left:62px;top:21.0px;width:45px;height:1px;background:rgba(255,255,255,.45)"></div><div class="a" style="left:62px;top:24.5px;width:45px;height:1px;background:rgba(255,255,255,.45)"></div>
<div class="a" style="left:8.5px;top:23.0px;width:34.5px;height:1px;background:#9e9aa4"></div><div class="a" style="left:8.5px;top:24.8px;width:34.5px;height:1px;background:#9e9aa4"></div>
</div>
<div class="a" style="left:1158.6px;top:857.5px;width:113.8px;height:40px;border-radius:9px;border:2px solid #7242dc"></div>
<div class="a" style="left:1290px;top:860.5px;width:113.5px;height:40px;border-radius:7px 7px 0 0;background:#f4f0eb;box-shadow:0 0 0 1px rgba(0,0,0,.07);overflow:hidden">
<div class="a" style="left:0.8px;top:9px;width:1.6px;height:31px;background:#5574ad"></div>
<div class="t" style="left:6.79px;top:0.04px;font-size:12px;color:#5574ad;transform:scaleX(0.8761);transform-origin:0 0;">Жданович</div>
<div class="t" style="left:9.30px;top:8.74px;font-size:12px;color:#5574ad;transform:scaleX(0.8205);transform-origin:0 0;">Анастасія</div>
<div class="a" style="left:65.4px;top:12.7px;width:44.599999999999994px;height:27.3px;border-radius:5px;background:#c95d67"></div>
<div class="a" style="left:70px;top:16.0px;width:36px;height:1px;background:rgba(255,255,255,.45)"></div><div class="a" style="left:70px;top:19.0px;width:36px;height:1px;background:rgba(255,255,255,.45)"></div><div class="a" style="left:70px;top:22.0px;width:36px;height:1px;background:rgba(255,255,255,.45)"></div>
<div class="a" style="left:16px;top:22.0px;width:27px;height:1px;background:#b8b4bc"></div><div class="a" style="left:16px;top:23.8px;width:27px;height:1px;background:#b8b4bc"></div>
</div>
<div class="a" style="left:1421px;top:860.5px;width:113.5px;height:40px;border-radius:7px 7px 0 0;background:#f4f0eb;box-shadow:0 0 0 1px rgba(0,0,0,.07);overflow:hidden">
<div class="a" style="left:0.5px;top:7px;width:1.6px;height:33px;background:#6f86b4"></div>
<div class="t" style="left:5.03px;top:19.76px;font-size:11.5px;color:#5574ad;transform:scaleX(0.8788);transform-origin:0 0;">Результати</div>
</div>
<div class="a" style="left:1551px;top:860.5px;width:15px;height:30px;border-radius:7px 0 0 0;background:#ecebf0"></div>
<div class="a" style="left:1527px;top:749px;width:36px;height:36px;border-radius:50%;background:#fff;box-shadow:0 1px 5px rgba(0,0,0,.08)"></div>
<svg style="left:1536px;top:758px" width="20" height="20"><circle cx="5" cy="5" r="3.2" stroke="#333" stroke-width="1.5" fill="none"/><circle cx="12.5" cy="5" r="3.2" stroke="#333" stroke-width="1.5" fill="none"/><circle cx="5" cy="12.5" r="3.2" stroke="#333" stroke-width="1.5" fill="none"/><circle cx="13.8" cy="13.2" r="4.8" fill="#5b5cf0"/><path d="M11.5 17 L11 19.5 L13.8 18.3 L16.6 19.5 L16.1 17" fill="#6a3be8"/><circle cx="13.8" cy="13" r="2.4" fill="#fff"/></svg>
<div class="a" style="left:1520px;top:794px;width:60px;height:36px;border-radius:18px;background:#fff;box-shadow:0 1px 5px rgba(0,0,0,.08)"></div>
<svg style="left:1528px;top:800px" width="24" height="24"><defs><linearGradient id="rg" x1="0" y1="0" x2="1" y2="1"><stop offset="0" stop-color="#8a2fe0"/><stop offset="1" stop-color="#2f8cf0"/></linearGradient></defs><circle cx="12" cy="12" r="10" stroke="url(#rg)" stroke-width="3" fill="#fff"/><rect x="7.5" y="9.8" width="2.2" height="4.6" rx="1.1" fill="#222"/><path d="M16.5 9.5 L13.6 12 L16.5 14.5" stroke="#222" stroke-width="1.9" fill="none"/></svg>
<svg style="left:1528px;top:724px" width="12" height="16"><path d="M1 1 V13 L4 10 L6.5 15 L8.5 14 L6 9 H10 Z" fill="#fff" stroke="#222" stroke-width="1"/></svg>
<div class="a" style="left:1566px;top:128px;width:10px;height:760px;background:#111418"></div>
<div class="a" style="left:0;top:888px;width:1576px;height:72px;background:#000"></div>
<div class="t" style="left:-7.21px;top:937.35px;font-size:16px;color:#fff;transform:scaleX(0.9694);transform-origin:0 0;-webkit-text-stroke:0.35px #fff;">Видео</div>
<div class="t" style="left:280.24px;top:937.35px;font-size:16px;color:#fff;transform:scaleX(0.9733);transform-origin:0 0;-webkit-text-stroke:0.35px #fff;">Участники</div>
<div class="t" style="left:408.29px;top:937.35px;font-size:16px;color:#fff;transform:scaleX(0.9506);transform-origin:0 0;-webkit-text-stroke:0.35px #fff;">Отреагировать</div>
<div class="t" style="left:567.25px;top:937.35px;font-size:16px;color:#fff;transform:scaleX(0.9194);transform-origin:0 0;-webkit-text-stroke:0.35px #fff;">Чат</div>
<div class="t" style="left:656.32px;top:937.35px;font-size:16px;color:#fff;transform:scaleX(0.9463);transform-origin:0 0;-webkit-text-stroke:0.35px #fff;">Поделиться</div>
<div class="t" style="left:769.26px;top:937.35px;font-size:16px;color:#fff;transform:scaleX(0.9959);transform-origin:0 0;-webkit-text-stroke:0.35px #fff;">Приложения</div>
<div class="t" style="left:882.00px;top:937.35px;font-size:16px;color:#fff;transform:scaleX(0.9924);transform-origin:0 0;-webkit-text-stroke:0.35px #fff;">Доски сообщений</div>
<div class="t" style="left:1031.58px;top:937.35px;font-size:16px;color:#fff;transform:scaleX(0.9751);transform-origin:0 0;-webkit-text-stroke:0.35px #fff;">Информация о конференции</div>
<div class="t" style="left:1276.52px;top:937.35px;font-size:16px;color:#fff;transform:scaleX(0.9538);transform-origin:0 0;-webkit-text-stroke:0.35px #fff;">Запись</div>
<div class="t" style="left:1361.00px;top:937.35px;font-size:16px;color:#fff;transform:scaleX(0.9764);transform-origin:0 0;-webkit-text-stroke:0.35px #fff;">Дополнительно</div>
<svg style="left:0;top:905px" width="32" height="22"><rect x="1" y="3" width="20" height="17" rx="4.5" stroke="#fff" stroke-width="2" fill="none"/><path d="M21 9 L29.5 3.5 V19.5 L21 14" stroke="#fff" stroke-width="2" fill="none" stroke-linejoin="round"/></svg>
<svg style="left:55.5px;top:911px" width="11" height="8"><path d="M1.2 6.2 L5.5 1.8 L9.8 6.2" stroke="#fff" stroke-width="1.9" fill="none"/></svg>
<svg style="left:377.5px;top:911px" width="11" height="8"><path d="M1.2 6.2 L5.5 1.8 L9.8 6.2" stroke="#fff" stroke-width="1.9" fill="none"/></svg>
<svg style="left:502.5px;top:911px" width="11" height="8"><path d="M1.2 6.2 L5.5 1.8 L9.8 6.2" stroke="#fff" stroke-width="1.9" fill="none"/></svg>
<svg style="left:615.5px;top:911px" width="11" height="8"><path d="M1.2 6.2 L5.5 1.8 L9.8 6.2" stroke="#fff" stroke-width="1.9" fill="none"/></svg>
<svg style="left:304px;top:905px" width="26" height="24"><circle cx="8.5" cy="5.5" r="4" stroke="#fff" stroke-width="2" fill="none"/><circle cx="17.5" cy="11.5" r="3.6" stroke="#fff" stroke-width="2" fill="none"/><path d="M1.5 21 V17 A5.5 5.5 0 0 1 7 11.5 H11" stroke="#fff" stroke-width="2" fill="none"/><path d="M11.5 22.5 V20.5 A4 4 0 0 1 15.5 16.5 H19.5 A4 4 0 0 1 23.5 20.5 V22.5 Z" stroke="#fff" stroke-width="2" fill="none"/></svg>
<div class="t" style="left:336.94px;top:905.79px;font-size:15px;color:#c8c8c8;transform:scaleX(1.0164);transform-origin:0 0;">22</div>
<svg style="left:444px;top:902px" width="34" height="28"><path d="M17 25.5 C8 19.5 2 14.5 2 8.7 C2 4.8 5 2 8.8 2 C12.3 2 15.2 4.2 17 7 C18.8 4.2 21.7 2 25.2 2 C29 2 32 4.8 32 8.7 C32 14.5 26 19.5 17 25.5 Z" stroke="#fff" stroke-width="2" fill="none" stroke-linejoin="round"/></svg>
<svg style="left:564px;top:901px" width="32" height="31"><path d="M9.5 5.5 A5 5 0 0 1 14 2 H24.5 A5 5 0 0 1 29.5 7 V15 A5 5 0 0 1 26 19.8" stroke="#fff" stroke-width="2" fill="none"/><path d="M6.5 8 H19.5 A5 5 0 0 1 24.5 13 V20 A5 5 0 0 1 19.5 25 H12 L7.5 29 V25 A5.5 5.5 0 0 1 2 19.5 V12.5 A4.5 4.5 0 0 1 6.5 8 Z" stroke="#fff" stroke-width="2" fill="none" stroke-linejoin="round"/><circle cx="8.5" cy="16.5" r="1.5" fill="#fff"/><circle cx="13.2" cy="16.5" r="1.5" fill="#fff"/><circle cx="17.9" cy="16.5" r="1.5" fill="#fff"/></svg>
<div class="a" style="left:683px;top:903.5px;width:30px;height:24px;border-radius:3px;background:#1fdc7c"></div>
<svg style="left:690px;top:906px" width="16" height="19"><path d="M8 17 V4 M2.5 9.5 L8 3.5 L13.5 9.5" stroke="#000" stroke-width="3" fill="none"/></svg>
<svg style="left:801px;top:902px" width="30" height="28"><path d="M2 11 V7 A5 5 0 0 1 7 2 H11 M27.5 17 V21 A5 5 0 0 1 22.5 26 H18.5" stroke="#fff" stroke-width="2" fill="none"/><circle cx="21.5" cy="7.8" r="5" stroke="#fff" stroke-width="2" fill="none"/><circle cx="7.8" cy="20.2" r="5" stroke="#fff" stroke-width="2" fill="none"/></svg>
<svg style="left:931px;top:902px" width="33" height="28"><path d="M14 25 H5 A3 3 0 0 1 2 22 V5 A3 3 0 0 1 5 2 H27 A3 3 0 0 1 30 5 V19" stroke="#fff" stroke-width="2" fill="none"/><path d="M14 26 L17 22 H30 V26 Z" fill="#fff" stroke="#fff" stroke-width="1" stroke-linejoin="round"/></svg>
<svg style="left:1120px;top:901px" width="33" height="31"><circle cx="16.5" cy="15.5" r="14" stroke="#fff" stroke-width="2" fill="none"/><circle cx="16.5" cy="8.5" r="1.8" fill="#fff"/><path d="M13 12.5 H17 V22.5 M13 22.5 H20.5" stroke="#fff" stroke-width="2.2" fill="none"/></svg>
<svg style="left:1287px;top:901px" width="31" height="30"><circle cx="15" cy="15" r="13.5" stroke="#fff" stroke-width="2" fill="none"/><circle cx="15" cy="15" r="5.8" fill="#fff"/></svg>
<svg style="left:1401px;top:900px" width="33" height="32"><circle cx="16.5" cy="16" r="14.5" stroke="#fff" stroke-width="2" fill="none"/><circle cx="9.5" cy="16" r="1.9" fill="#fff"/><circle cx="16.5" cy="16" r="1.9" fill="#fff"/><circle cx="23.5" cy="16" r="1.9" fill="#fff"/></svg>
</body></html>
